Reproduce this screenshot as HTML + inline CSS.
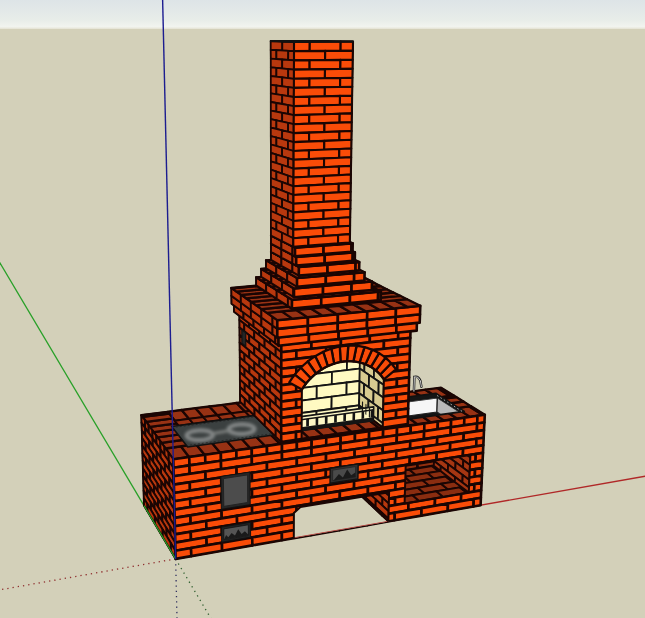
<!DOCTYPE html>
<html><head><meta charset="utf-8"><style>html,body{margin:0;padding:0;background:#d3d0b9;}svg{display:block;}</style></head>
<body><svg width="645" height="618" viewBox="0 0 645 618"><defs><filter id="blur1" x="-20%" y="-20%" width="140%" height="140%"><feGaussianBlur stdDeviation="1.7"/></filter><linearGradient id="sky" x1="0" y1="0" x2="0" y2="1"><stop offset="0" stop-color="#dde4e7"/><stop offset="0.7" stop-color="#e8ede9"/><stop offset="0.92" stop-color="#f2f4ef"/><stop offset="1" stop-color="#e4e2d2"/></linearGradient><clipPath id="opn"><polygon points="293.8,538.1 293.9,513.0 300.5,507.0 389.1,492.3 388.4,521.4"/></clipPath><clipPath id="niche"><polygon points="405.7,465.0 470.4,454.9 468.8,492.5 404.6,503.5"/></clipPath><clipPath id="sink"><polygon points="382.8,405.1 437.4,397.8 458.4,411.2 402.1,419.1"/></clipPath><clipPath id="arch"><polygon points="301.6,439.1 382.7,427.6 383.9,379.3 382.0,376.6 379.9,374.2 377.6,371.9 375.1,369.8 372.5,367.9 369.7,366.3 366.8,364.8 363.8,363.6 360.6,362.6 357.4,361.9 354.1,361.4 350.7,361.2 347.3,361.2 343.8,361.5 340.3,362.0 336.9,362.8 333.4,363.9 330.0,365.1 326.7,366.7 323.4,368.4 320.3,370.4 317.2,372.6 314.2,375.0 311.4,377.5 308.8,380.3 306.3,383.2 304.0,386.3 301.9,389.5"/></clipPath></defs><rect width="645" height="618" fill="#d3d0b9"/><rect width="645" height="29" fill="url(#sky)"/><line x1="175.6" y1="558.9" x2="734.9" y2="460.4" stroke="#b02828" stroke-width="1.3"/><line x1="175.6" y1="558.9" x2="-34.6" y2="204.6" stroke="#28a028" stroke-width="1.3"/><line x1="175.6" y1="558.9" x2="-211.9" y2="627.1" stroke="#903030" stroke-width="1.3" stroke-dasharray="1.3,4"/><line x1="175.6" y1="558.9" x2="231.5" y2="653.1" stroke="#306030" stroke-width="1.3" stroke-dasharray="1.3,4"/><line x1="175.6" y1="558.9" x2="179.3" y2="715.3" stroke="#303060" stroke-width="1.3" stroke-dasharray="1.3,4"/><polygon points="352.4,399.3 441.0,387.7 484.8,414.8 390.8,428.2" fill="#1a0503" stroke="#1a0503" stroke-width="1.5" stroke-linejoin="round"/><polygon points="387.5,404.4 430.9,398.6 447.4,409.3 402.9,415.5" fill="#983214" stroke="#1a0503" stroke-width="2.3" stroke-linejoin="round"/><polygon points="390.8,428.2 404.3,426.3 391.7,417.1 378.4,418.9" fill="#983214" stroke="#1a0503" stroke-width="2.3" stroke-linejoin="round"/><polygon points="404.3,426.3 417.7,424.4 404.9,415.2 391.7,417.1" fill="#983214" stroke="#1a0503" stroke-width="2.3" stroke-linejoin="round"/><polygon points="417.7,424.4 431.0,422.5 417.9,413.4 404.9,415.2" fill="#983214" stroke="#1a0503" stroke-width="2.3" stroke-linejoin="round"/><polygon points="431.0,422.5 444.2,420.6 430.9,411.6 417.9,413.4" fill="#983214" stroke="#1a0503" stroke-width="2.3" stroke-linejoin="round"/><polygon points="444.2,420.6 457.3,418.7 443.7,409.8 430.9,411.6" fill="#983214" stroke="#1a0503" stroke-width="2.3" stroke-linejoin="round"/><polygon points="457.3,418.7 470.2,416.9 456.4,408.1 443.7,409.8" fill="#983214" stroke="#1a0503" stroke-width="2.3" stroke-linejoin="round"/><polygon points="470.2,416.9 483.0,415.0 468.9,406.3 456.4,408.1" fill="#983214" stroke="#1a0503" stroke-width="2.3" stroke-linejoin="round"/><polygon points="483.0,415.0 484.8,414.8 470.7,406.1 468.9,406.3" fill="#983214" stroke="#1a0503" stroke-width="2.3" stroke-linejoin="round"/><polygon points="387.5,404.4 400.2,402.7 388.5,394.6 375.9,396.2" fill="#983214" stroke="#1a0503" stroke-width="2.3" stroke-linejoin="round"/><polygon points="400.2,402.7 412.9,401.0 400.9,392.9 388.5,394.6" fill="#983214" stroke="#1a0503" stroke-width="2.3" stroke-linejoin="round"/><polygon points="412.9,401.0 425.4,399.3 413.2,391.3 400.9,392.9" fill="#983214" stroke="#1a0503" stroke-width="2.3" stroke-linejoin="round"/><polygon points="425.4,399.3 437.9,397.7 425.4,389.7 413.2,391.3" fill="#983214" stroke="#1a0503" stroke-width="2.3" stroke-linejoin="round"/><polygon points="437.9,397.7 450.2,396.0 437.5,388.1 425.4,389.7" fill="#983214" stroke="#1a0503" stroke-width="2.3" stroke-linejoin="round"/><polygon points="450.2,396.0 453.7,395.6 441.0,387.7 437.5,388.1" fill="#983214" stroke="#1a0503" stroke-width="2.3" stroke-linejoin="round"/><polygon points="447.4,409.3 470.7,406.1 463.4,401.5 440.2,404.7" fill="#983214" stroke="#1a0503" stroke-width="2.3" stroke-linejoin="round"/><polygon points="440.2,404.7 463.4,401.5 456.2,397.1 433.3,400.2" fill="#983214" stroke="#1a0503" stroke-width="2.3" stroke-linejoin="round"/><polygon points="433.3,400.2 456.2,397.1 453.7,395.6 430.9,398.6" fill="#983214" stroke="#1a0503" stroke-width="2.3" stroke-linejoin="round"/><polygon points="251.4,401.2 340.0,389.9 390.8,428.2 294.2,442.0" fill="#1a0503" stroke="#1a0503" stroke-width="1.5" stroke-linejoin="round"/><polygon points="285.3,406.4 326.7,401.0 353.5,422.4 310.0,428.4" fill="#983214" stroke="#1a0503" stroke-width="2.3" stroke-linejoin="round"/><polygon points="294.2,442.0 308.7,439.9 298.0,430.1 283.8,432.0" fill="#983214" stroke="#1a0503" stroke-width="2.3" stroke-linejoin="round"/><polygon points="308.7,439.9 323.1,437.9 312.1,428.1 298.0,430.1" fill="#983214" stroke="#1a0503" stroke-width="2.3" stroke-linejoin="round"/><polygon points="323.1,437.9 337.3,435.9 326.0,426.2 312.1,428.1" fill="#983214" stroke="#1a0503" stroke-width="2.3" stroke-linejoin="round"/><polygon points="337.3,435.9 351.4,433.8 339.8,424.3 326.0,426.2" fill="#983214" stroke="#1a0503" stroke-width="2.3" stroke-linejoin="round"/><polygon points="351.4,433.8 365.3,431.9 353.5,422.4 339.8,424.3" fill="#983214" stroke="#1a0503" stroke-width="2.3" stroke-linejoin="round"/><polygon points="365.3,431.9 379.1,429.9 367.0,420.5 353.5,422.4" fill="#983214" stroke="#1a0503" stroke-width="2.3" stroke-linejoin="round"/><polygon points="379.1,429.9 390.8,428.2 378.4,418.9 367.0,420.5" fill="#983214" stroke="#1a0503" stroke-width="2.3" stroke-linejoin="round"/><polygon points="141.3,415.1 251.4,401.2 294.2,442.0 173.3,459.3" fill="#1a0503" stroke="#1a0503" stroke-width="1.5" stroke-linejoin="round"/><polygon points="173.3,459.3 189.1,457.0 180.9,446.3 165.5,448.5" fill="#983214" stroke="#1a0503" stroke-width="2.3" stroke-linejoin="round"/><polygon points="189.1,457.0 204.6,454.8 196.1,444.2 180.9,446.3" fill="#983214" stroke="#1a0503" stroke-width="2.3" stroke-linejoin="round"/><polygon points="204.6,454.8 220.0,452.6 211.2,442.1 196.1,444.2" fill="#983214" stroke="#1a0503" stroke-width="2.3" stroke-linejoin="round"/><polygon points="220.0,452.6 235.3,450.4 226.1,440.1 211.2,442.1" fill="#983214" stroke="#1a0503" stroke-width="2.3" stroke-linejoin="round"/><polygon points="235.3,450.4 250.4,448.3 240.9,438.0 226.1,440.1" fill="#983214" stroke="#1a0503" stroke-width="2.3" stroke-linejoin="round"/><polygon points="250.4,448.3 265.3,446.1 255.5,436.0 240.9,438.0" fill="#983214" stroke="#1a0503" stroke-width="2.3" stroke-linejoin="round"/><polygon points="265.3,446.1 280.1,444.0 270.0,434.0 255.5,436.0" fill="#983214" stroke="#1a0503" stroke-width="2.3" stroke-linejoin="round"/><polygon points="280.1,444.0 294.2,442.0 283.8,432.0 270.0,434.0" fill="#983214" stroke="#1a0503" stroke-width="2.3" stroke-linejoin="round"/><polygon points="174.8,420.8 189.2,418.9 181.7,410.0 167.6,411.8" fill="#983214" stroke="#1a0503" stroke-width="2.3" stroke-linejoin="round"/><polygon points="189.2,418.9 203.3,417.1 195.6,408.2 181.7,410.0" fill="#983214" stroke="#1a0503" stroke-width="2.3" stroke-linejoin="round"/><polygon points="203.3,417.1 217.4,415.2 209.4,406.5 195.6,408.2" fill="#983214" stroke="#1a0503" stroke-width="2.3" stroke-linejoin="round"/><polygon points="217.4,415.2 231.3,413.4 223.0,404.8 209.4,406.5" fill="#983214" stroke="#1a0503" stroke-width="2.3" stroke-linejoin="round"/><polygon points="231.3,413.4 245.1,411.6 236.5,403.0 223.0,404.8" fill="#983214" stroke="#1a0503" stroke-width="2.3" stroke-linejoin="round"/><polygon points="245.1,411.6 258.8,409.8 249.9,401.3 236.5,403.0" fill="#983214" stroke="#1a0503" stroke-width="2.3" stroke-linejoin="round"/><polygon points="258.8,409.8 260.3,409.6 251.4,401.2 249.9,401.3" fill="#983214" stroke="#1a0503" stroke-width="2.3" stroke-linejoin="round"/><polygon points="165.5,448.5 193.8,444.5 189.4,439.0 161.4,442.9" fill="#983214" stroke="#1a0503" stroke-width="2.3" stroke-linejoin="round"/><polygon points="161.4,442.9 189.4,439.0 185.2,433.7 157.5,437.4" fill="#983214" stroke="#1a0503" stroke-width="2.3" stroke-linejoin="round"/><polygon points="157.5,437.4 185.2,433.7 181.0,428.4 153.6,432.1" fill="#983214" stroke="#1a0503" stroke-width="2.3" stroke-linejoin="round"/><polygon points="153.6,432.1 181.0,428.4 176.9,423.4 149.8,426.9" fill="#983214" stroke="#1a0503" stroke-width="2.3" stroke-linejoin="round"/><polygon points="149.8,426.9 176.9,423.4 172.9,418.4 146.2,421.8" fill="#983214" stroke="#1a0503" stroke-width="2.3" stroke-linejoin="round"/><polygon points="146.2,421.8 172.9,418.4 169.1,413.5 142.6,416.9" fill="#983214" stroke="#1a0503" stroke-width="2.3" stroke-linejoin="round"/><polygon points="142.6,416.9 169.1,413.5 167.6,411.8 141.3,415.1" fill="#983214" stroke="#1a0503" stroke-width="2.3" stroke-linejoin="round"/><polygon points="141.3,415.1 173.3,459.3 175.6,558.9 144.0,505.6" fill="#1a0503" stroke="#1a0503" stroke-width="1.5" stroke-linejoin="round"/><polygon points="141.3,415.1 144.9,420.1 145.1,427.9 141.5,422.8" fill="#b8380e" stroke="#1a0503" stroke-width="1.9" stroke-linejoin="round"/><polygon points="144.9,420.1 148.6,425.2 148.8,433.1 145.1,427.9" fill="#b8380e" stroke="#1a0503" stroke-width="1.9" stroke-linejoin="round"/><polygon points="148.6,425.2 152.4,430.4 152.6,438.4 148.8,433.1" fill="#b8380e" stroke="#1a0503" stroke-width="1.9" stroke-linejoin="round"/><polygon points="152.4,430.4 156.3,435.8 156.5,443.9 152.6,438.4" fill="#b8380e" stroke="#1a0503" stroke-width="1.9" stroke-linejoin="round"/><polygon points="156.3,435.8 160.3,441.3 160.5,449.5 156.5,443.9" fill="#b8380e" stroke="#1a0503" stroke-width="1.9" stroke-linejoin="round"/><polygon points="160.3,441.3 164.4,447.0 164.6,455.3 160.5,449.5" fill="#b8380e" stroke="#1a0503" stroke-width="1.9" stroke-linejoin="round"/><polygon points="164.4,447.0 168.6,452.8 168.8,461.2 164.6,455.3" fill="#b8380e" stroke="#1a0503" stroke-width="1.9" stroke-linejoin="round"/><polygon points="168.6,452.8 173.0,458.8 173.2,467.3 168.8,461.2" fill="#b8380e" stroke="#1a0503" stroke-width="1.9" stroke-linejoin="round"/><polygon points="173.0,458.8 173.3,459.3 173.5,467.8 173.2,467.3" fill="#b8380e" stroke="#1a0503" stroke-width="1.9" stroke-linejoin="round"/><polygon points="141.5,422.8 145.1,427.9 145.4,435.6 141.8,430.5" fill="#b8380e" stroke="#1a0503" stroke-width="1.9" stroke-linejoin="round"/><polygon points="145.1,427.9 152.6,438.4 152.8,446.3 145.4,435.6" fill="#b8380e" stroke="#1a0503" stroke-width="1.9" stroke-linejoin="round"/><polygon points="152.6,438.4 160.5,449.5 160.7,457.6 152.8,446.3" fill="#b8380e" stroke="#1a0503" stroke-width="1.9" stroke-linejoin="round"/><polygon points="160.5,449.5 168.8,461.2 169.1,469.5 160.7,457.6" fill="#b8380e" stroke="#1a0503" stroke-width="1.9" stroke-linejoin="round"/><polygon points="168.8,461.2 173.5,467.8 173.7,476.2 169.1,469.5" fill="#b8380e" stroke="#1a0503" stroke-width="1.9" stroke-linejoin="round"/><polygon points="141.8,430.5 149.1,440.9 149.3,448.7 142.0,438.1" fill="#b8380e" stroke="#1a0503" stroke-width="1.9" stroke-linejoin="round"/><polygon points="149.1,440.9 156.7,451.9 156.9,459.9 149.3,448.7" fill="#b8380e" stroke="#1a0503" stroke-width="1.9" stroke-linejoin="round"/><polygon points="156.7,451.9 164.8,463.5 165.0,471.7 156.9,459.9" fill="#b8380e" stroke="#1a0503" stroke-width="1.9" stroke-linejoin="round"/><polygon points="164.8,463.5 173.4,475.7 173.6,484.1 165.0,471.7" fill="#b8380e" stroke="#1a0503" stroke-width="1.9" stroke-linejoin="round"/><polygon points="173.4,475.7 173.7,476.2 173.9,484.6 173.6,484.1" fill="#b8380e" stroke="#1a0503" stroke-width="1.9" stroke-linejoin="round"/><polygon points="142.0,438.1 145.6,443.3 145.8,451.0 142.2,445.7" fill="#b8380e" stroke="#1a0503" stroke-width="1.9" stroke-linejoin="round"/><polygon points="145.6,443.3 153.1,454.2 153.3,462.1 145.8,451.0" fill="#b8380e" stroke="#1a0503" stroke-width="1.9" stroke-linejoin="round"/><polygon points="153.1,454.2 160.9,465.7 161.1,473.8 153.3,462.1" fill="#b8380e" stroke="#1a0503" stroke-width="1.9" stroke-linejoin="round"/><polygon points="160.9,465.7 169.3,477.8 169.5,486.1 161.1,473.8" fill="#b8380e" stroke="#1a0503" stroke-width="1.9" stroke-linejoin="round"/><polygon points="169.3,477.8 173.9,484.6 174.1,493.0 169.5,486.1" fill="#b8380e" stroke="#1a0503" stroke-width="1.9" stroke-linejoin="round"/><polygon points="142.2,445.7 149.5,456.5 149.7,464.2 142.4,453.3" fill="#b8380e" stroke="#1a0503" stroke-width="1.9" stroke-linejoin="round"/><polygon points="149.5,456.5 157.2,467.9 157.4,475.8 149.7,464.2" fill="#b8380e" stroke="#1a0503" stroke-width="1.9" stroke-linejoin="round"/><polygon points="157.2,467.9 165.2,479.9 165.4,488.0 157.4,475.8" fill="#b8380e" stroke="#1a0503" stroke-width="1.9" stroke-linejoin="round"/><polygon points="165.2,479.9 173.8,492.5 174.0,500.8 165.4,488.0" fill="#b8380e" stroke="#1a0503" stroke-width="1.9" stroke-linejoin="round"/><polygon points="173.8,492.5 174.1,493.0 174.3,501.3 174.0,500.8" fill="#b8380e" stroke="#1a0503" stroke-width="1.9" stroke-linejoin="round"/><polygon points="142.4,453.3 146.0,458.7 146.3,466.3 142.7,460.8" fill="#b8380e" stroke="#1a0503" stroke-width="1.9" stroke-linejoin="round"/><polygon points="146.0,458.7 153.5,470.0 153.7,477.8 146.3,466.3" fill="#b8380e" stroke="#1a0503" stroke-width="1.9" stroke-linejoin="round"/><polygon points="153.5,470.0 161.4,481.8 161.6,489.8 153.7,477.8" fill="#b8380e" stroke="#1a0503" stroke-width="1.9" stroke-linejoin="round"/><polygon points="161.4,481.8 169.7,494.3 169.9,502.5 161.6,489.8" fill="#b8380e" stroke="#1a0503" stroke-width="1.9" stroke-linejoin="round"/><polygon points="169.7,494.3 174.3,501.3 174.5,509.6 169.9,502.5" fill="#b8380e" stroke="#1a0503" stroke-width="1.9" stroke-linejoin="round"/><polygon points="142.7,460.8 149.9,472.0 150.2,479.7 142.9,468.4" fill="#b8380e" stroke="#1a0503" stroke-width="1.9" stroke-linejoin="round"/><polygon points="149.9,472.0 157.6,483.7 157.8,491.6 150.2,479.7" fill="#b8380e" stroke="#1a0503" stroke-width="1.9" stroke-linejoin="round"/><polygon points="157.6,483.7 165.7,496.1 165.9,504.2 157.8,491.6" fill="#b8380e" stroke="#1a0503" stroke-width="1.9" stroke-linejoin="round"/><polygon points="165.7,496.1 174.2,509.2 174.4,517.4 165.9,504.2" fill="#b8380e" stroke="#1a0503" stroke-width="1.9" stroke-linejoin="round"/><polygon points="174.2,509.2 174.5,509.6 174.7,517.9 174.4,517.4" fill="#b8380e" stroke="#1a0503" stroke-width="1.9" stroke-linejoin="round"/><polygon points="142.9,468.4 146.5,473.9 146.7,481.5 143.1,475.9" fill="#b8380e" stroke="#1a0503" stroke-width="1.9" stroke-linejoin="round"/><polygon points="146.5,473.9 153.9,485.6 154.1,493.3 146.7,481.5" fill="#b8380e" stroke="#1a0503" stroke-width="1.9" stroke-linejoin="round"/><polygon points="153.9,485.6 161.8,497.8 162.0,505.7 154.1,493.3" fill="#b8380e" stroke="#1a0503" stroke-width="1.9" stroke-linejoin="round"/><polygon points="161.8,497.8 170.0,510.7 170.2,518.9 162.0,505.7" fill="#b8380e" stroke="#1a0503" stroke-width="1.9" stroke-linejoin="round"/><polygon points="170.0,510.7 174.7,517.9 174.9,526.2 170.2,518.9" fill="#b8380e" stroke="#1a0503" stroke-width="1.9" stroke-linejoin="round"/><polygon points="143.1,475.9 150.4,487.4 150.6,495.0 143.4,483.3" fill="#b8380e" stroke="#1a0503" stroke-width="1.9" stroke-linejoin="round"/><polygon points="150.4,487.4 158.0,499.5 158.2,507.3 150.6,495.0" fill="#b8380e" stroke="#1a0503" stroke-width="1.9" stroke-linejoin="round"/><polygon points="158.0,499.5 166.1,512.2 166.3,520.2 158.2,507.3" fill="#b8380e" stroke="#1a0503" stroke-width="1.9" stroke-linejoin="round"/><polygon points="166.1,512.2 174.6,525.7 174.7,533.9 166.3,520.2" fill="#b8380e" stroke="#1a0503" stroke-width="1.9" stroke-linejoin="round"/><polygon points="174.6,525.7 174.9,526.2 175.1,534.4 174.7,533.9" fill="#b8380e" stroke="#1a0503" stroke-width="1.9" stroke-linejoin="round"/><polygon points="143.4,483.3 146.9,489.1 147.2,496.6 143.6,490.8" fill="#b8380e" stroke="#1a0503" stroke-width="1.9" stroke-linejoin="round"/><polygon points="146.9,489.1 154.4,501.1 154.6,508.8 147.2,496.6" fill="#b8380e" stroke="#1a0503" stroke-width="1.9" stroke-linejoin="round"/><polygon points="154.4,501.1 162.2,513.7 162.4,521.6 154.6,508.8" fill="#b8380e" stroke="#1a0503" stroke-width="1.9" stroke-linejoin="round"/><polygon points="162.2,513.7 170.4,527.0 170.6,535.0 162.4,521.6" fill="#b8380e" stroke="#1a0503" stroke-width="1.9" stroke-linejoin="round"/><polygon points="170.4,527.0 175.1,534.4 175.3,542.6 170.6,535.0" fill="#b8380e" stroke="#1a0503" stroke-width="1.9" stroke-linejoin="round"/><polygon points="143.6,490.8 150.8,502.6 151.0,510.2 143.8,498.2" fill="#b8380e" stroke="#1a0503" stroke-width="1.9" stroke-linejoin="round"/><polygon points="150.8,502.6 158.4,515.1 158.6,522.9 151.0,510.2" fill="#b8380e" stroke="#1a0503" stroke-width="1.9" stroke-linejoin="round"/><polygon points="158.4,515.1 166.5,528.2 166.7,536.2 158.6,522.9" fill="#b8380e" stroke="#1a0503" stroke-width="1.9" stroke-linejoin="round"/><polygon points="166.5,528.2 174.9,542.1 175.1,550.2 166.7,536.2" fill="#b8380e" stroke="#1a0503" stroke-width="1.9" stroke-linejoin="round"/><polygon points="174.9,542.1 175.3,542.6 175.4,550.7 175.1,550.2" fill="#b8380e" stroke="#1a0503" stroke-width="1.9" stroke-linejoin="round"/><polygon points="143.8,498.2 147.4,504.1 147.6,511.6 144.0,505.6" fill="#b8380e" stroke="#1a0503" stroke-width="1.9" stroke-linejoin="round"/><polygon points="147.4,504.1 154.8,516.5 155.0,524.1 147.6,511.6" fill="#b8380e" stroke="#1a0503" stroke-width="1.9" stroke-linejoin="round"/><polygon points="154.8,516.5 162.6,529.4 162.8,537.3 155.0,524.1" fill="#b8380e" stroke="#1a0503" stroke-width="1.9" stroke-linejoin="round"/><polygon points="162.6,529.4 170.8,543.1 171.0,551.1 162.8,537.3" fill="#b8380e" stroke="#1a0503" stroke-width="1.9" stroke-linejoin="round"/><polygon points="170.8,543.1 175.4,550.7 175.6,558.9 171.0,551.1" fill="#b8380e" stroke="#1a0503" stroke-width="1.9" stroke-linejoin="round"/><polygon points="173.3,459.3 484.8,414.8 480.6,505.2 175.6,558.9" fill="#1a0503" stroke="#1a0503" stroke-width="1.5" stroke-linejoin="round"/><polygon points="173.3,459.3 189.3,457.0 189.5,465.4 173.5,467.8" fill="#fa4c08" stroke="#1a0503" stroke-width="2.6" stroke-linejoin="round"/><polygon points="189.3,457.0 205.2,454.7 205.3,463.1 189.5,465.4" fill="#fa4c08" stroke="#1a0503" stroke-width="2.6" stroke-linejoin="round"/><polygon points="205.2,454.7 220.9,452.5 221.0,460.8 205.3,463.1" fill="#fa4c08" stroke="#1a0503" stroke-width="2.6" stroke-linejoin="round"/><polygon points="220.9,452.5 236.4,450.3 236.5,458.6 221.0,460.8" fill="#fa4c08" stroke="#1a0503" stroke-width="2.6" stroke-linejoin="round"/><polygon points="236.4,450.3 251.8,448.1 251.8,456.3 236.5,458.6" fill="#fa4c08" stroke="#1a0503" stroke-width="2.6" stroke-linejoin="round"/><polygon points="251.8,448.1 267.0,445.9 267.0,454.1 251.8,456.3" fill="#fa4c08" stroke="#1a0503" stroke-width="2.6" stroke-linejoin="round"/><polygon points="267.0,445.9 282.0,443.8 282.0,451.9 267.0,454.1" fill="#fa4c08" stroke="#1a0503" stroke-width="2.6" stroke-linejoin="round"/><polygon points="282.0,443.8 296.9,441.6 296.9,449.8 282.0,451.9" fill="#fa4c08" stroke="#1a0503" stroke-width="2.6" stroke-linejoin="round"/><polygon points="296.9,441.6 311.7,439.5 311.6,447.6 296.9,449.8" fill="#fa4c08" stroke="#1a0503" stroke-width="2.6" stroke-linejoin="round"/><polygon points="311.7,439.5 326.3,437.4 326.2,445.5 311.6,447.6" fill="#fa4c08" stroke="#1a0503" stroke-width="2.6" stroke-linejoin="round"/><polygon points="326.3,437.4 340.7,435.4 340.6,443.4 326.2,445.5" fill="#fa4c08" stroke="#1a0503" stroke-width="2.6" stroke-linejoin="round"/><polygon points="340.7,435.4 355.0,433.3 354.9,441.3 340.6,443.4" fill="#fa4c08" stroke="#1a0503" stroke-width="2.6" stroke-linejoin="round"/><polygon points="355.0,433.3 369.2,431.3 369.0,439.3 354.9,441.3" fill="#fa4c08" stroke="#1a0503" stroke-width="2.6" stroke-linejoin="round"/><polygon points="369.2,431.3 383.2,429.3 383.0,437.2 369.0,439.3" fill="#fa4c08" stroke="#1a0503" stroke-width="2.6" stroke-linejoin="round"/><polygon points="383.2,429.3 397.1,427.3 396.9,435.2 383.0,437.2" fill="#fa4c08" stroke="#1a0503" stroke-width="2.6" stroke-linejoin="round"/><polygon points="397.1,427.3 410.8,425.4 410.6,433.2 396.9,435.2" fill="#fa4c08" stroke="#1a0503" stroke-width="2.6" stroke-linejoin="round"/><polygon points="410.8,425.4 424.4,423.4 424.2,431.2 410.6,433.2" fill="#fa4c08" stroke="#1a0503" stroke-width="2.6" stroke-linejoin="round"/><polygon points="424.4,423.4 437.9,421.5 437.6,429.3 424.2,431.2" fill="#fa4c08" stroke="#1a0503" stroke-width="2.6" stroke-linejoin="round"/><polygon points="437.9,421.5 451.2,419.6 450.9,427.3 437.6,429.3" fill="#fa4c08" stroke="#1a0503" stroke-width="2.6" stroke-linejoin="round"/><polygon points="451.2,419.6 464.4,417.7 464.1,425.4 450.9,427.3" fill="#fa4c08" stroke="#1a0503" stroke-width="2.6" stroke-linejoin="round"/><polygon points="464.4,417.7 477.5,415.8 477.2,423.5 464.1,425.4" fill="#fa4c08" stroke="#1a0503" stroke-width="2.6" stroke-linejoin="round"/><polygon points="477.5,415.8 484.8,414.8 484.4,422.5 477.2,423.5" fill="#fa4c08" stroke="#1a0503" stroke-width="2.6" stroke-linejoin="round"/><polygon points="173.5,467.8 189.5,465.4 189.7,473.8 173.7,476.2" fill="#fa4c08" stroke="#1a0503" stroke-width="2.6" stroke-linejoin="round"/><polygon points="189.5,465.4 221.0,460.8 221.1,469.2 189.7,473.8" fill="#fa4c08" stroke="#1a0503" stroke-width="2.6" stroke-linejoin="round"/><polygon points="221.0,460.8 251.8,456.3 251.9,464.6 221.1,469.2" fill="#fa4c08" stroke="#1a0503" stroke-width="2.6" stroke-linejoin="round"/><polygon points="251.8,456.3 282.0,451.9 282.0,460.1 251.9,464.6" fill="#fa4c08" stroke="#1a0503" stroke-width="2.6" stroke-linejoin="round"/><polygon points="282.0,451.9 311.6,447.6 311.5,455.7 282.0,460.1" fill="#fa4c08" stroke="#1a0503" stroke-width="2.6" stroke-linejoin="round"/><polygon points="311.6,447.6 340.6,443.4 340.5,451.4 311.5,455.7" fill="#fa4c08" stroke="#1a0503" stroke-width="2.6" stroke-linejoin="round"/><polygon points="340.6,443.4 369.0,439.3 368.8,447.2 340.5,451.4" fill="#fa4c08" stroke="#1a0503" stroke-width="2.6" stroke-linejoin="round"/><polygon points="369.0,439.3 396.9,435.2 396.6,443.1 368.8,447.2" fill="#fa4c08" stroke="#1a0503" stroke-width="2.6" stroke-linejoin="round"/><polygon points="396.9,435.2 424.2,431.2 423.9,439.0 396.6,443.1" fill="#fa4c08" stroke="#1a0503" stroke-width="2.6" stroke-linejoin="round"/><polygon points="424.2,431.2 450.9,427.3 450.6,435.1 423.9,439.0" fill="#fa4c08" stroke="#1a0503" stroke-width="2.6" stroke-linejoin="round"/><polygon points="450.9,427.3 477.2,423.5 476.8,431.2 450.6,435.1" fill="#fa4c08" stroke="#1a0503" stroke-width="2.6" stroke-linejoin="round"/><polygon points="477.2,423.5 484.4,422.5 484.0,430.1 476.8,431.2" fill="#fa4c08" stroke="#1a0503" stroke-width="2.6" stroke-linejoin="round"/><polygon points="173.7,476.2 205.5,471.5 205.6,479.8 173.9,484.6" fill="#fa4c08" stroke="#1a0503" stroke-width="2.6" stroke-linejoin="round"/><polygon points="205.5,471.5 236.6,466.9 236.6,475.1 205.6,479.8" fill="#fa4c08" stroke="#1a0503" stroke-width="2.6" stroke-linejoin="round"/><polygon points="236.6,466.9 267.0,462.3 267.0,470.5 236.6,475.1" fill="#fa4c08" stroke="#1a0503" stroke-width="2.6" stroke-linejoin="round"/><polygon points="267.0,462.3 296.9,457.9 296.8,466.0 267.0,470.5" fill="#fa4c08" stroke="#1a0503" stroke-width="2.6" stroke-linejoin="round"/><polygon points="296.9,457.9 326.1,453.6 326.0,461.6 296.8,466.0" fill="#fa4c08" stroke="#1a0503" stroke-width="2.6" stroke-linejoin="round"/><polygon points="326.1,453.6 354.7,449.3 354.6,457.3 326.0,461.6" fill="#fa4c08" stroke="#1a0503" stroke-width="2.6" stroke-linejoin="round"/><polygon points="354.7,449.3 382.8,445.1 382.6,453.0 354.6,457.3" fill="#fa4c08" stroke="#1a0503" stroke-width="2.6" stroke-linejoin="round"/><polygon points="382.8,445.1 410.3,441.1 410.1,448.9 382.6,453.0" fill="#fa4c08" stroke="#1a0503" stroke-width="2.6" stroke-linejoin="round"/><polygon points="410.3,441.1 437.3,437.1 437.0,444.8 410.1,448.9" fill="#fa4c08" stroke="#1a0503" stroke-width="2.6" stroke-linejoin="round"/><polygon points="437.3,437.1 463.8,433.1 463.5,440.8 437.0,444.8" fill="#fa4c08" stroke="#1a0503" stroke-width="2.6" stroke-linejoin="round"/><polygon points="463.8,433.1 484.0,430.1 483.7,437.7 463.5,440.8" fill="#fa4c08" stroke="#1a0503" stroke-width="2.6" stroke-linejoin="round"/><polygon points="173.9,484.6 189.8,482.2 190.0,490.5 174.1,493.0" fill="#fa4c08" stroke="#1a0503" stroke-width="2.6" stroke-linejoin="round"/><polygon points="189.8,482.2 221.2,477.5 221.3,485.7 190.0,490.5" fill="#fa4c08" stroke="#1a0503" stroke-width="2.6" stroke-linejoin="round"/><polygon points="221.2,477.5 251.9,472.8 252.0,481.0 221.3,485.7" fill="#fa4c08" stroke="#1a0503" stroke-width="2.6" stroke-linejoin="round"/><polygon points="251.9,472.8 282.0,468.3 282.0,476.4 252.0,481.0" fill="#fa4c08" stroke="#1a0503" stroke-width="2.6" stroke-linejoin="round"/><polygon points="282.0,468.3 311.5,463.8 311.4,471.8 282.0,476.4" fill="#fa4c08" stroke="#1a0503" stroke-width="2.6" stroke-linejoin="round"/><polygon points="311.5,463.8 340.4,459.4 340.2,467.4 311.4,471.8" fill="#fa4c08" stroke="#1a0503" stroke-width="2.6" stroke-linejoin="round"/><polygon points="340.4,459.4 368.7,455.1 368.5,463.0 340.2,467.4" fill="#fa4c08" stroke="#1a0503" stroke-width="2.6" stroke-linejoin="round"/><polygon points="368.7,455.1 396.4,450.9 396.2,458.8 368.5,463.0" fill="#fa4c08" stroke="#1a0503" stroke-width="2.6" stroke-linejoin="round"/><polygon points="396.4,450.9 423.6,446.8 423.4,454.6 396.2,458.8" fill="#fa4c08" stroke="#1a0503" stroke-width="2.6" stroke-linejoin="round"/><polygon points="423.6,446.8 450.3,442.8 450.0,450.5 423.4,454.6" fill="#fa4c08" stroke="#1a0503" stroke-width="2.6" stroke-linejoin="round"/><polygon points="450.3,442.8 476.5,438.8 476.2,446.4 450.0,450.5" fill="#fa4c08" stroke="#1a0503" stroke-width="2.6" stroke-linejoin="round"/><polygon points="476.5,438.8 483.7,437.7 483.3,445.3 476.2,446.4" fill="#fa4c08" stroke="#1a0503" stroke-width="2.6" stroke-linejoin="round"/><polygon points="174.1,493.0 205.7,488.1 205.9,496.4 174.3,501.3" fill="#fa4c08" stroke="#1a0503" stroke-width="2.6" stroke-linejoin="round"/><polygon points="205.7,488.1 236.7,483.3 236.8,491.5 205.9,496.4" fill="#fa4c08" stroke="#1a0503" stroke-width="2.6" stroke-linejoin="round"/><polygon points="236.7,483.3 267.1,478.7 267.1,486.8 236.8,491.5" fill="#fa4c08" stroke="#1a0503" stroke-width="2.6" stroke-linejoin="round"/><polygon points="267.1,478.7 296.8,474.1 296.7,482.1 267.1,486.8" fill="#fa4c08" stroke="#1a0503" stroke-width="2.6" stroke-linejoin="round"/><polygon points="296.8,474.1 325.9,469.6 325.8,477.6 296.7,482.1" fill="#fa4c08" stroke="#1a0503" stroke-width="2.6" stroke-linejoin="round"/><polygon points="325.9,469.6 354.5,465.2 354.3,473.1 325.8,477.6" fill="#fa4c08" stroke="#1a0503" stroke-width="2.6" stroke-linejoin="round"/><polygon points="354.5,465.2 382.4,460.9 382.2,468.7 354.3,473.1" fill="#fa4c08" stroke="#1a0503" stroke-width="2.6" stroke-linejoin="round"/><polygon points="382.4,460.9 409.9,456.7 409.6,464.4 382.2,468.7" fill="#fa4c08" stroke="#1a0503" stroke-width="2.6" stroke-linejoin="round"/><polygon points="409.9,456.7 436.8,452.5 436.5,460.2 409.6,464.4" fill="#fa4c08" stroke="#1a0503" stroke-width="2.6" stroke-linejoin="round"/><polygon points="436.8,452.5 463.2,448.4 462.8,456.1 436.5,460.2" fill="#fa4c08" stroke="#1a0503" stroke-width="2.6" stroke-linejoin="round"/><polygon points="463.2,448.4 483.3,445.3 483.0,452.9 462.8,456.1" fill="#fa4c08" stroke="#1a0503" stroke-width="2.6" stroke-linejoin="round"/><polygon points="174.3,501.3 190.2,498.8 190.3,507.1 174.5,509.6" fill="#fa4c08" stroke="#1a0503" stroke-width="2.6" stroke-linejoin="round"/><polygon points="190.2,498.8 221.4,493.9 221.5,502.1 190.3,507.1" fill="#fa4c08" stroke="#1a0503" stroke-width="2.6" stroke-linejoin="round"/><polygon points="221.4,493.9 252.0,489.1 252.1,497.3 221.5,502.1" fill="#fa4c08" stroke="#1a0503" stroke-width="2.6" stroke-linejoin="round"/><polygon points="252.0,489.1 282.0,484.4 282.0,492.5 252.1,497.3" fill="#fa4c08" stroke="#1a0503" stroke-width="2.6" stroke-linejoin="round"/><polygon points="282.0,484.4 311.4,479.8 311.3,487.8 282.0,492.5" fill="#fa4c08" stroke="#1a0503" stroke-width="2.6" stroke-linejoin="round"/><polygon points="311.4,479.8 340.1,475.3 340.0,483.2 311.3,487.8" fill="#fa4c08" stroke="#1a0503" stroke-width="2.6" stroke-linejoin="round"/><polygon points="340.1,475.3 368.3,470.9 368.2,478.7 340.0,483.2" fill="#fa4c08" stroke="#1a0503" stroke-width="2.6" stroke-linejoin="round"/><polygon points="368.3,470.9 396.0,466.6 395.8,474.3 368.2,478.7" fill="#fa4c08" stroke="#1a0503" stroke-width="2.6" stroke-linejoin="round"/><polygon points="396.0,466.6 423.1,462.3 422.9,470.0 395.8,474.3" fill="#fa4c08" stroke="#1a0503" stroke-width="2.6" stroke-linejoin="round"/><polygon points="423.1,462.3 449.7,458.1 449.4,465.8 422.9,470.0" fill="#fa4c08" stroke="#1a0503" stroke-width="2.6" stroke-linejoin="round"/><polygon points="449.7,458.1 475.8,454.0 475.5,461.6 449.4,465.8" fill="#fa4c08" stroke="#1a0503" stroke-width="2.6" stroke-linejoin="round"/><polygon points="475.8,454.0 483.0,452.9 482.6,460.5 475.5,461.6" fill="#fa4c08" stroke="#1a0503" stroke-width="2.6" stroke-linejoin="round"/><polygon points="174.5,509.6 206.0,504.6 206.1,512.8 174.7,517.9" fill="#fa4c08" stroke="#1a0503" stroke-width="2.6" stroke-linejoin="round"/><polygon points="206.0,504.6 236.9,499.7 236.9,507.8 206.1,512.8" fill="#fa4c08" stroke="#1a0503" stroke-width="2.6" stroke-linejoin="round"/><polygon points="236.9,499.7 267.1,494.9 267.1,502.9 236.9,507.8" fill="#fa4c08" stroke="#1a0503" stroke-width="2.6" stroke-linejoin="round"/><polygon points="267.1,494.9 296.7,490.1 296.7,498.1 267.1,502.9" fill="#fa4c08" stroke="#1a0503" stroke-width="2.6" stroke-linejoin="round"/><polygon points="296.7,490.1 325.7,485.5 325.6,493.4 296.7,498.1" fill="#fa4c08" stroke="#1a0503" stroke-width="2.6" stroke-linejoin="round"/><polygon points="325.7,485.5 354.2,481.0 354.0,488.8 325.6,493.4" fill="#fa4c08" stroke="#1a0503" stroke-width="2.6" stroke-linejoin="round"/><polygon points="354.2,481.0 382.1,476.5 381.9,484.3 354.0,488.8" fill="#fa4c08" stroke="#1a0503" stroke-width="2.6" stroke-linejoin="round"/><polygon points="382.1,476.5 409.4,472.1 409.2,479.9 381.9,484.3" fill="#fa4c08" stroke="#1a0503" stroke-width="2.6" stroke-linejoin="round"/><polygon points="409.4,472.1 436.2,467.9 435.9,475.5 409.2,479.9" fill="#fa4c08" stroke="#1a0503" stroke-width="2.6" stroke-linejoin="round"/><polygon points="436.2,467.9 462.5,463.7 462.2,471.2 435.9,475.5" fill="#fa4c08" stroke="#1a0503" stroke-width="2.6" stroke-linejoin="round"/><polygon points="462.5,463.7 482.6,460.5 482.3,468.0 462.2,471.2" fill="#fa4c08" stroke="#1a0503" stroke-width="2.6" stroke-linejoin="round"/><polygon points="174.7,517.9 190.5,515.4 190.6,523.6 174.9,526.2" fill="#fa4c08" stroke="#1a0503" stroke-width="2.6" stroke-linejoin="round"/><polygon points="190.5,515.4 221.6,510.3 221.7,518.4 190.6,523.6" fill="#fa4c08" stroke="#1a0503" stroke-width="2.6" stroke-linejoin="round"/><polygon points="221.6,510.3 252.1,505.4 252.1,513.4 221.7,518.4" fill="#fa4c08" stroke="#1a0503" stroke-width="2.6" stroke-linejoin="round"/><polygon points="252.1,505.4 282.0,500.5 282.0,508.5 252.1,513.4" fill="#fa4c08" stroke="#1a0503" stroke-width="2.6" stroke-linejoin="round"/><polygon points="282.0,500.5 311.2,495.8 311.2,503.7 282.0,508.5" fill="#fa4c08" stroke="#1a0503" stroke-width="2.6" stroke-linejoin="round"/><polygon points="311.2,495.8 339.9,491.1 339.8,498.9 311.2,503.7" fill="#fa4c08" stroke="#1a0503" stroke-width="2.6" stroke-linejoin="round"/><polygon points="339.9,491.1 368.0,486.5 367.9,494.3 339.8,498.9" fill="#fa4c08" stroke="#1a0503" stroke-width="2.6" stroke-linejoin="round"/><polygon points="368.0,486.5 395.6,482.1 395.4,489.8 367.9,494.3" fill="#fa4c08" stroke="#1a0503" stroke-width="2.6" stroke-linejoin="round"/><polygon points="395.6,482.1 422.6,477.7 422.4,485.3 395.4,489.8" fill="#fa4c08" stroke="#1a0503" stroke-width="2.6" stroke-linejoin="round"/><polygon points="422.6,477.7 449.1,473.4 448.8,480.9 422.4,485.3" fill="#fa4c08" stroke="#1a0503" stroke-width="2.6" stroke-linejoin="round"/><polygon points="449.1,473.4 475.1,469.1 474.8,476.7 448.8,480.9" fill="#fa4c08" stroke="#1a0503" stroke-width="2.6" stroke-linejoin="round"/><polygon points="475.1,469.1 482.3,468.0 481.9,475.5 474.8,476.7" fill="#fa4c08" stroke="#1a0503" stroke-width="2.6" stroke-linejoin="round"/><polygon points="174.9,526.2 206.3,521.0 206.4,529.1 175.1,534.4" fill="#fa4c08" stroke="#1a0503" stroke-width="2.6" stroke-linejoin="round"/><polygon points="206.3,521.0 237.0,515.9 237.1,524.0 206.4,529.1" fill="#fa4c08" stroke="#1a0503" stroke-width="2.6" stroke-linejoin="round"/><polygon points="237.0,515.9 267.1,510.9 267.1,518.9 237.1,524.0" fill="#fa4c08" stroke="#1a0503" stroke-width="2.6" stroke-linejoin="round"/><polygon points="267.1,510.9 296.6,506.1 296.6,514.0 267.1,518.9" fill="#fa4c08" stroke="#1a0503" stroke-width="2.6" stroke-linejoin="round"/><polygon points="296.6,506.1 325.6,501.3 325.5,509.2 296.6,514.0" fill="#fa4c08" stroke="#1a0503" stroke-width="2.6" stroke-linejoin="round"/><polygon points="325.6,501.3 353.9,496.6 353.8,504.4 325.5,509.2" fill="#fa4c08" stroke="#1a0503" stroke-width="2.6" stroke-linejoin="round"/><polygon points="353.9,496.6 381.7,492.0 381.5,499.7 353.8,504.4" fill="#fa4c08" stroke="#1a0503" stroke-width="2.6" stroke-linejoin="round"/><polygon points="381.7,492.0 408.9,487.5 408.7,495.2 381.5,499.7" fill="#fa4c08" stroke="#1a0503" stroke-width="2.6" stroke-linejoin="round"/><polygon points="408.9,487.5 435.7,483.1 435.4,490.7 408.7,495.2" fill="#fa4c08" stroke="#1a0503" stroke-width="2.6" stroke-linejoin="round"/><polygon points="435.7,483.1 461.9,478.8 461.6,486.3 435.4,490.7" fill="#fa4c08" stroke="#1a0503" stroke-width="2.6" stroke-linejoin="round"/><polygon points="461.9,478.8 481.9,475.5 481.6,482.9 461.6,486.3" fill="#fa4c08" stroke="#1a0503" stroke-width="2.6" stroke-linejoin="round"/><polygon points="175.1,534.4 190.8,531.8 191.0,539.9 175.3,542.6" fill="#fa4c08" stroke="#1a0503" stroke-width="2.6" stroke-linejoin="round"/><polygon points="190.8,531.8 221.8,526.6 221.9,534.6 191.0,539.9" fill="#fa4c08" stroke="#1a0503" stroke-width="2.6" stroke-linejoin="round"/><polygon points="221.8,526.6 252.2,521.5 252.2,529.5 221.9,534.6" fill="#fa4c08" stroke="#1a0503" stroke-width="2.6" stroke-linejoin="round"/><polygon points="252.2,521.5 281.9,516.5 281.9,524.4 252.2,529.5" fill="#fa4c08" stroke="#1a0503" stroke-width="2.6" stroke-linejoin="round"/><polygon points="281.9,516.5 311.1,511.6 311.0,519.4 281.9,524.4" fill="#fa4c08" stroke="#1a0503" stroke-width="2.6" stroke-linejoin="round"/><polygon points="311.1,511.6 339.7,506.8 339.6,514.6 311.0,519.4" fill="#fa4c08" stroke="#1a0503" stroke-width="2.6" stroke-linejoin="round"/><polygon points="339.7,506.8 367.7,502.1 367.5,509.8 339.6,514.6" fill="#fa4c08" stroke="#1a0503" stroke-width="2.6" stroke-linejoin="round"/><polygon points="367.7,502.1 395.2,497.5 395.0,505.1 367.5,509.8" fill="#fa4c08" stroke="#1a0503" stroke-width="2.6" stroke-linejoin="round"/><polygon points="395.2,497.5 422.1,492.9 421.9,500.5 395.0,505.1" fill="#fa4c08" stroke="#1a0503" stroke-width="2.6" stroke-linejoin="round"/><polygon points="422.1,492.9 448.5,488.5 448.2,496.0 421.9,500.5" fill="#fa4c08" stroke="#1a0503" stroke-width="2.6" stroke-linejoin="round"/><polygon points="448.5,488.5 474.5,484.1 474.1,491.6 448.2,496.0" fill="#fa4c08" stroke="#1a0503" stroke-width="2.6" stroke-linejoin="round"/><polygon points="474.5,484.1 481.6,482.9 481.2,490.4 474.1,491.6" fill="#fa4c08" stroke="#1a0503" stroke-width="2.6" stroke-linejoin="round"/><polygon points="175.3,542.6 206.5,537.3 206.7,545.3 175.4,550.7" fill="#fa4c08" stroke="#1a0503" stroke-width="2.6" stroke-linejoin="round"/><polygon points="206.5,537.3 237.2,532.0 237.2,540.0 206.7,545.3" fill="#fa4c08" stroke="#1a0503" stroke-width="2.6" stroke-linejoin="round"/><polygon points="237.2,532.0 267.2,526.9 267.2,534.9 237.2,540.0" fill="#fa4c08" stroke="#1a0503" stroke-width="2.6" stroke-linejoin="round"/><polygon points="267.2,526.9 296.6,521.9 296.5,529.8 267.2,534.9" fill="#fa4c08" stroke="#1a0503" stroke-width="2.6" stroke-linejoin="round"/><polygon points="296.6,521.9 325.4,517.0 325.3,524.8 296.5,529.8" fill="#fa4c08" stroke="#1a0503" stroke-width="2.6" stroke-linejoin="round"/><polygon points="325.4,517.0 353.6,512.2 353.5,519.9 325.3,524.8" fill="#fa4c08" stroke="#1a0503" stroke-width="2.6" stroke-linejoin="round"/><polygon points="353.6,512.2 381.3,507.4 381.1,515.1 353.5,519.9" fill="#fa4c08" stroke="#1a0503" stroke-width="2.6" stroke-linejoin="round"/><polygon points="381.3,507.4 408.5,502.8 408.3,510.4 381.1,515.1" fill="#fa4c08" stroke="#1a0503" stroke-width="2.6" stroke-linejoin="round"/><polygon points="408.5,502.8 435.1,498.3 434.8,505.8 408.3,510.4" fill="#fa4c08" stroke="#1a0503" stroke-width="2.6" stroke-linejoin="round"/><polygon points="435.1,498.3 461.3,493.8 460.9,501.3 434.8,505.8" fill="#fa4c08" stroke="#1a0503" stroke-width="2.6" stroke-linejoin="round"/><polygon points="461.3,493.8 481.2,490.4 480.9,497.8 460.9,501.3" fill="#fa4c08" stroke="#1a0503" stroke-width="2.6" stroke-linejoin="round"/><polygon points="175.4,550.7 191.1,548.0 191.3,556.1 175.6,558.9" fill="#fa4c08" stroke="#1a0503" stroke-width="2.6" stroke-linejoin="round"/><polygon points="191.1,548.0 222.0,542.7 222.1,550.7 191.3,556.1" fill="#fa4c08" stroke="#1a0503" stroke-width="2.6" stroke-linejoin="round"/><polygon points="222.0,542.7 252.3,537.4 252.3,545.4 222.1,550.7" fill="#fa4c08" stroke="#1a0503" stroke-width="2.6" stroke-linejoin="round"/><polygon points="252.3,537.4 281.9,532.3 281.9,540.2 252.3,545.4" fill="#fa4c08" stroke="#1a0503" stroke-width="2.6" stroke-linejoin="round"/><polygon points="281.9,532.3 311.0,527.3 310.9,535.1 281.9,540.2" fill="#fa4c08" stroke="#1a0503" stroke-width="2.6" stroke-linejoin="round"/><polygon points="311.0,527.3 339.5,522.3 339.3,530.1 310.9,535.1" fill="#fa4c08" stroke="#1a0503" stroke-width="2.6" stroke-linejoin="round"/><polygon points="339.5,522.3 367.4,517.5 367.2,525.2 339.3,530.1" fill="#fa4c08" stroke="#1a0503" stroke-width="2.6" stroke-linejoin="round"/><polygon points="367.4,517.5 394.8,512.7 394.6,520.3 367.2,525.2" fill="#fa4c08" stroke="#1a0503" stroke-width="2.6" stroke-linejoin="round"/><polygon points="394.8,512.7 421.6,508.1 421.4,515.6 394.6,520.3" fill="#fa4c08" stroke="#1a0503" stroke-width="2.6" stroke-linejoin="round"/><polygon points="421.6,508.1 448.0,503.5 447.7,511.0 421.4,515.6" fill="#fa4c08" stroke="#1a0503" stroke-width="2.6" stroke-linejoin="round"/><polygon points="448.0,503.5 473.8,499.0 473.5,506.5 447.7,511.0" fill="#fa4c08" stroke="#1a0503" stroke-width="2.6" stroke-linejoin="round"/><polygon points="473.8,499.0 480.9,497.8 480.6,505.2 473.5,506.5" fill="#fa4c08" stroke="#1a0503" stroke-width="2.6" stroke-linejoin="round"/><g clip-path="url(#opn)"><rect width="645" height="618" fill="#d3d0b9"/><line x1="175.6" y1="558.9" x2="734.9" y2="460.4" stroke="#b02828" stroke-width="1.3"/><polygon points="351.6,448.1 389.4,480.5 388.4,521.4 350.9,486.4" fill="#1a0503" stroke="#1a0503" stroke-width="1.5" stroke-linejoin="round"/><polygon points="351.6,448.1 363.7,458.5 363.5,465.9 351.4,455.3" fill="#b8380e" stroke="#1a0503" stroke-width="1.9" stroke-linejoin="round"/><polygon points="363.7,458.5 376.4,469.3 376.2,476.9 363.5,465.9" fill="#b8380e" stroke="#1a0503" stroke-width="1.9" stroke-linejoin="round"/><polygon points="376.4,469.3 389.4,480.5 389.2,488.2 376.2,476.9" fill="#b8380e" stroke="#1a0503" stroke-width="1.9" stroke-linejoin="round"/><polygon points="351.4,455.3 357.4,460.5 357.3,467.8 351.3,462.5" fill="#b8380e" stroke="#1a0503" stroke-width="1.9" stroke-linejoin="round"/><polygon points="357.4,460.5 369.8,471.3 369.6,478.8 357.3,467.8" fill="#b8380e" stroke="#1a0503" stroke-width="1.9" stroke-linejoin="round"/><polygon points="369.8,471.3 382.8,482.6 382.6,490.3 369.6,478.8" fill="#b8380e" stroke="#1a0503" stroke-width="1.9" stroke-linejoin="round"/><polygon points="382.8,482.6 389.2,488.2 389.0,495.9 382.6,490.3" fill="#b8380e" stroke="#1a0503" stroke-width="1.9" stroke-linejoin="round"/><polygon points="351.3,462.5 363.4,473.2 363.2,480.6 351.2,469.7" fill="#b8380e" stroke="#1a0503" stroke-width="1.9" stroke-linejoin="round"/><polygon points="363.4,473.2 376.1,484.4 375.9,492.0 363.2,480.6" fill="#b8380e" stroke="#1a0503" stroke-width="1.9" stroke-linejoin="round"/><polygon points="376.1,484.4 389.0,495.9 388.8,503.6 375.9,492.0" fill="#b8380e" stroke="#1a0503" stroke-width="1.9" stroke-linejoin="round"/><polygon points="351.2,469.7 357.2,475.1 357.0,482.3 351.1,476.9" fill="#b8380e" stroke="#1a0503" stroke-width="1.9" stroke-linejoin="round"/><polygon points="357.2,475.1 369.5,486.2 369.3,493.6 357.0,482.3" fill="#b8380e" stroke="#1a0503" stroke-width="1.9" stroke-linejoin="round"/><polygon points="369.5,486.2 382.5,497.9 382.3,505.4 369.3,493.6" fill="#b8380e" stroke="#1a0503" stroke-width="1.9" stroke-linejoin="round"/><polygon points="382.5,497.9 388.8,503.6 388.6,511.3 382.3,505.4" fill="#b8380e" stroke="#1a0503" stroke-width="1.9" stroke-linejoin="round"/><polygon points="351.1,476.9 363.1,487.9 363.0,495.2 351.0,484.0" fill="#b8380e" stroke="#1a0503" stroke-width="1.9" stroke-linejoin="round"/><polygon points="363.1,487.9 375.7,499.4 375.6,506.9 363.0,495.2" fill="#b8380e" stroke="#1a0503" stroke-width="1.9" stroke-linejoin="round"/><polygon points="375.7,499.4 388.6,511.3 388.5,518.9 375.6,506.9" fill="#b8380e" stroke="#1a0503" stroke-width="1.9" stroke-linejoin="round"/><polygon points="351.0,484.0 356.9,489.5 356.8,491.9 350.9,486.4" fill="#b8380e" stroke="#1a0503" stroke-width="1.9" stroke-linejoin="round"/><polygon points="356.9,489.5 369.2,501.0 369.1,503.4 356.8,491.9" fill="#b8380e" stroke="#1a0503" stroke-width="1.9" stroke-linejoin="round"/><polygon points="369.2,501.0 382.1,513.0 382.0,515.5 369.1,503.4" fill="#b8380e" stroke="#1a0503" stroke-width="1.9" stroke-linejoin="round"/><polygon points="382.1,513.0 388.5,518.9 388.4,521.4 382.0,515.5" fill="#b8380e" stroke="#1a0503" stroke-width="1.9" stroke-linejoin="round"/></g><polyline points="293.8,538.1 293.9,513.0 300.5,507.0 389.1,492.3 388.4,521.4" fill="none" stroke="#1a0503" stroke-width="2"/><g clip-path="url(#niche)"><polygon points="354.8,422.1 453.7,408.4 451.5,463.0 353.8,478.5" fill="#1a0503" stroke="#1a0503" stroke-width="1.5" stroke-linejoin="round"/><polygon points="354.8,422.1 380.9,418.5 380.7,425.9 354.6,429.6" fill="#93300f" stroke="#1a0503" stroke-width="2.6" stroke-linejoin="round"/><polygon points="380.9,418.5 406.5,415.0 406.3,422.3 380.7,425.9" fill="#93300f" stroke="#1a0503" stroke-width="2.6" stroke-linejoin="round"/><polygon points="406.5,415.0 431.7,411.5 431.4,418.7 406.3,422.3" fill="#93300f" stroke="#1a0503" stroke-width="2.6" stroke-linejoin="round"/><polygon points="431.7,411.5 453.7,408.4 453.4,415.6 431.4,418.7" fill="#93300f" stroke="#1a0503" stroke-width="2.6" stroke-linejoin="round"/><polygon points="354.6,429.6 367.7,427.7 367.6,435.1 354.5,437.0" fill="#93300f" stroke="#1a0503" stroke-width="2.6" stroke-linejoin="round"/><polygon points="367.7,427.7 393.6,424.1 393.4,431.4 367.6,435.1" fill="#93300f" stroke="#1a0503" stroke-width="2.6" stroke-linejoin="round"/><polygon points="393.6,424.1 418.9,420.5 418.7,427.7 393.4,431.4" fill="#93300f" stroke="#1a0503" stroke-width="2.6" stroke-linejoin="round"/><polygon points="418.9,420.5 443.8,417.0 443.5,424.2 418.7,427.7" fill="#93300f" stroke="#1a0503" stroke-width="2.6" stroke-linejoin="round"/><polygon points="443.8,417.0 453.4,415.6 453.1,422.8 443.5,424.2" fill="#93300f" stroke="#1a0503" stroke-width="2.6" stroke-linejoin="round"/><polygon points="354.5,437.0 380.5,433.2 380.4,440.6 354.4,444.4" fill="#93300f" stroke="#1a0503" stroke-width="2.6" stroke-linejoin="round"/><polygon points="380.5,433.2 406.1,429.6 405.9,436.8 380.4,440.6" fill="#93300f" stroke="#1a0503" stroke-width="2.6" stroke-linejoin="round"/><polygon points="406.1,429.6 431.2,425.9 430.9,433.1 405.9,436.8" fill="#93300f" stroke="#1a0503" stroke-width="2.6" stroke-linejoin="round"/><polygon points="431.2,425.9 453.1,422.8 452.9,429.9 430.9,433.1" fill="#93300f" stroke="#1a0503" stroke-width="2.6" stroke-linejoin="round"/><polygon points="354.4,444.4 367.4,442.5 367.3,449.8 354.3,451.7" fill="#93300f" stroke="#1a0503" stroke-width="2.6" stroke-linejoin="round"/><polygon points="367.4,442.5 393.2,438.7 393.0,446.0 367.3,449.8" fill="#93300f" stroke="#1a0503" stroke-width="2.6" stroke-linejoin="round"/><polygon points="393.2,438.7 418.4,435.0 418.2,442.2 393.0,446.0" fill="#93300f" stroke="#1a0503" stroke-width="2.6" stroke-linejoin="round"/><polygon points="418.4,435.0 443.3,431.3 443.0,438.5 418.2,442.2" fill="#93300f" stroke="#1a0503" stroke-width="2.6" stroke-linejoin="round"/><polygon points="443.3,431.3 452.9,429.9 452.6,437.1 443.0,438.5" fill="#93300f" stroke="#1a0503" stroke-width="2.6" stroke-linejoin="round"/><polygon points="354.3,451.7 380.2,447.9 380.0,455.1 354.1,459.1" fill="#93300f" stroke="#1a0503" stroke-width="2.6" stroke-linejoin="round"/><polygon points="380.2,447.9 405.7,444.1 405.4,451.3 380.0,455.1" fill="#93300f" stroke="#1a0503" stroke-width="2.6" stroke-linejoin="round"/><polygon points="405.7,444.1 430.7,440.3 430.4,447.5 405.4,451.3" fill="#93300f" stroke="#1a0503" stroke-width="2.6" stroke-linejoin="round"/><polygon points="430.7,440.3 452.6,437.1 452.3,444.2 430.4,447.5" fill="#93300f" stroke="#1a0503" stroke-width="2.6" stroke-linejoin="round"/><polygon points="354.1,459.1 367.1,457.1 367.0,464.4 354.0,466.4" fill="#93300f" stroke="#1a0503" stroke-width="2.6" stroke-linejoin="round"/><polygon points="367.1,457.1 392.8,453.2 392.6,460.4 367.0,464.4" fill="#93300f" stroke="#1a0503" stroke-width="2.6" stroke-linejoin="round"/><polygon points="392.8,453.2 418.0,449.4 417.8,456.5 392.6,460.4" fill="#93300f" stroke="#1a0503" stroke-width="2.6" stroke-linejoin="round"/><polygon points="418.0,449.4 442.7,445.6 442.5,452.7 417.8,456.5" fill="#93300f" stroke="#1a0503" stroke-width="2.6" stroke-linejoin="round"/><polygon points="442.7,445.6 452.3,444.2 452.0,451.2 442.5,452.7" fill="#93300f" stroke="#1a0503" stroke-width="2.6" stroke-linejoin="round"/><polygon points="354.0,466.4 379.9,462.4 379.7,469.6 353.9,473.7" fill="#93300f" stroke="#1a0503" stroke-width="2.6" stroke-linejoin="round"/><polygon points="379.9,462.4 405.2,458.5 405.0,465.6 379.7,469.6" fill="#93300f" stroke="#1a0503" stroke-width="2.6" stroke-linejoin="round"/><polygon points="405.2,458.5 430.2,454.6 429.9,461.7 405.0,465.6" fill="#93300f" stroke="#1a0503" stroke-width="2.6" stroke-linejoin="round"/><polygon points="430.2,454.6 452.0,451.2 451.7,458.3 429.9,461.7" fill="#93300f" stroke="#1a0503" stroke-width="2.6" stroke-linejoin="round"/><polygon points="353.9,473.7 366.8,471.6 366.7,476.5 353.8,478.5" fill="#93300f" stroke="#1a0503" stroke-width="2.6" stroke-linejoin="round"/><polygon points="366.8,471.6 392.4,467.6 392.3,472.4 366.7,476.5" fill="#93300f" stroke="#1a0503" stroke-width="2.6" stroke-linejoin="round"/><polygon points="392.4,467.6 417.5,463.7 417.4,468.4 392.3,472.4" fill="#93300f" stroke="#1a0503" stroke-width="2.6" stroke-linejoin="round"/><polygon points="417.5,463.7 442.2,459.8 442.0,464.5 417.4,468.4" fill="#93300f" stroke="#1a0503" stroke-width="2.6" stroke-linejoin="round"/><polygon points="442.2,459.8 451.7,458.3 451.5,463.0 442.0,464.5" fill="#93300f" stroke="#1a0503" stroke-width="2.6" stroke-linejoin="round"/><polygon points="363.2,477.0 442.7,464.4 478.1,490.9 394.7,505.2" fill="#1a0503" stroke="#1a0503" stroke-width="1.5" stroke-linejoin="round"/><polygon points="363.2,477.0 386.5,473.3 392.8,478.6 369.3,482.4" fill="#8a2d10" stroke="#1a0503" stroke-width="1.9" stroke-linejoin="round"/><polygon points="386.5,473.3 409.4,469.7 415.9,474.9 392.8,478.6" fill="#8a2d10" stroke="#1a0503" stroke-width="1.9" stroke-linejoin="round"/><polygon points="409.4,469.7 432.0,466.1 438.7,471.2 415.9,474.9" fill="#8a2d10" stroke="#1a0503" stroke-width="1.9" stroke-linejoin="round"/><polygon points="432.0,466.1 442.7,464.4 449.5,469.5 438.7,471.2" fill="#8a2d10" stroke="#1a0503" stroke-width="1.9" stroke-linejoin="round"/><polygon points="369.3,482.4 381.1,480.5 387.4,486.0 375.5,487.9" fill="#8a2d10" stroke="#1a0503" stroke-width="1.9" stroke-linejoin="round"/><polygon points="381.1,480.5 404.4,476.8 411.0,482.2 387.4,486.0" fill="#8a2d10" stroke="#1a0503" stroke-width="1.9" stroke-linejoin="round"/><polygon points="404.4,476.8 427.4,473.1 434.1,478.4 411.0,482.2" fill="#8a2d10" stroke="#1a0503" stroke-width="1.9" stroke-linejoin="round"/><polygon points="427.4,473.1 449.5,469.5 456.5,474.7 434.1,478.4" fill="#8a2d10" stroke="#1a0503" stroke-width="1.9" stroke-linejoin="round"/><polygon points="375.5,487.9 399.2,484.1 405.8,489.6 381.8,493.6" fill="#8a2d10" stroke="#1a0503" stroke-width="1.9" stroke-linejoin="round"/><polygon points="399.2,484.1 422.6,480.3 429.4,485.7 405.8,489.6" fill="#8a2d10" stroke="#1a0503" stroke-width="1.9" stroke-linejoin="round"/><polygon points="422.6,480.3 445.6,476.5 452.6,481.9 429.4,485.7" fill="#8a2d10" stroke="#1a0503" stroke-width="1.9" stroke-linejoin="round"/><polygon points="445.6,476.5 456.5,474.7 463.6,480.1 452.6,481.9" fill="#8a2d10" stroke="#1a0503" stroke-width="1.9" stroke-linejoin="round"/><polygon points="381.8,493.6 393.9,491.6 400.5,497.4 388.3,499.4" fill="#8a2d10" stroke="#1a0503" stroke-width="1.9" stroke-linejoin="round"/><polygon points="393.9,491.6 417.6,487.7 424.5,493.3 400.5,497.4" fill="#8a2d10" stroke="#1a0503" stroke-width="1.9" stroke-linejoin="round"/><polygon points="417.6,487.7 441.0,483.8 448.1,489.4 424.5,493.3" fill="#8a2d10" stroke="#1a0503" stroke-width="1.9" stroke-linejoin="round"/><polygon points="441.0,483.8 463.6,480.1 470.9,485.5 448.1,489.4" fill="#8a2d10" stroke="#1a0503" stroke-width="1.9" stroke-linejoin="round"/><polygon points="388.3,499.4 412.5,495.3 419.2,501.0 394.7,505.2" fill="#8a2d10" stroke="#1a0503" stroke-width="1.9" stroke-linejoin="round"/><polygon points="412.5,495.3 436.4,491.3 443.3,496.9 419.2,501.0" fill="#8a2d10" stroke="#1a0503" stroke-width="1.9" stroke-linejoin="round"/><polygon points="436.4,491.3 459.8,487.4 466.9,492.8 443.3,496.9" fill="#8a2d10" stroke="#1a0503" stroke-width="1.9" stroke-linejoin="round"/><polygon points="459.8,487.4 470.9,485.5 478.1,490.9 466.9,492.8" fill="#8a2d10" stroke="#1a0503" stroke-width="1.9" stroke-linejoin="round"/><polygon points="435.7,410.9 471.3,434.5 468.8,492.5 433.8,465.8" fill="#1a0503" stroke="#1a0503" stroke-width="1.5" stroke-linejoin="round"/><polygon points="435.7,410.9 449.8,420.3 449.5,427.7 435.5,418.1" fill="#a53612" stroke="#1a0503" stroke-width="1.9" stroke-linejoin="round"/><polygon points="449.8,420.3 464.6,430.1 464.3,437.7 449.5,427.7" fill="#a53612" stroke="#1a0503" stroke-width="1.9" stroke-linejoin="round"/><polygon points="464.6,430.1 471.3,434.5 471.0,442.2 464.3,437.7" fill="#a53612" stroke="#1a0503" stroke-width="1.9" stroke-linejoin="round"/><polygon points="435.5,418.1 442.4,422.8 442.2,430.1 435.2,425.4" fill="#a53612" stroke="#1a0503" stroke-width="1.9" stroke-linejoin="round"/><polygon points="442.4,422.8 456.8,432.6 456.5,440.1 442.2,430.1" fill="#a53612" stroke="#1a0503" stroke-width="1.9" stroke-linejoin="round"/><polygon points="456.8,432.6 471.0,442.2 470.6,449.8 456.5,440.1" fill="#a53612" stroke="#1a0503" stroke-width="1.9" stroke-linejoin="round"/><polygon points="435.2,425.4 449.2,435.0 449.0,442.4 435.0,432.5" fill="#a53612" stroke="#1a0503" stroke-width="1.9" stroke-linejoin="round"/><polygon points="449.2,435.0 464.0,445.2 463.7,452.7 449.0,442.4" fill="#a53612" stroke="#1a0503" stroke-width="1.9" stroke-linejoin="round"/><polygon points="464.0,445.2 470.6,449.8 470.3,457.4 463.7,452.7" fill="#a53612" stroke="#1a0503" stroke-width="1.9" stroke-linejoin="round"/><polygon points="435.0,432.5 441.9,437.4 441.6,444.7 434.7,439.7" fill="#a53612" stroke="#1a0503" stroke-width="1.9" stroke-linejoin="round"/><polygon points="441.9,437.4 456.2,447.5 455.9,454.9 441.6,444.7" fill="#a53612" stroke="#1a0503" stroke-width="1.9" stroke-linejoin="round"/><polygon points="456.2,447.5 470.3,457.4 470.0,465.0 455.9,454.9" fill="#a53612" stroke="#1a0503" stroke-width="1.9" stroke-linejoin="round"/><polygon points="434.7,439.7 448.7,449.7 448.4,457.0 434.5,446.9" fill="#a53612" stroke="#1a0503" stroke-width="1.9" stroke-linejoin="round"/><polygon points="448.7,449.7 463.3,460.2 463.0,467.7 448.4,457.0" fill="#a53612" stroke="#1a0503" stroke-width="1.9" stroke-linejoin="round"/><polygon points="463.3,460.2 470.0,465.0 469.6,472.5 463.0,467.7" fill="#a53612" stroke="#1a0503" stroke-width="1.9" stroke-linejoin="round"/><polygon points="434.5,446.9 441.3,451.9 441.1,459.1 434.2,454.0" fill="#a53612" stroke="#1a0503" stroke-width="1.9" stroke-linejoin="round"/><polygon points="441.3,451.9 455.6,462.3 455.3,469.7 441.1,459.1" fill="#a53612" stroke="#1a0503" stroke-width="1.9" stroke-linejoin="round"/><polygon points="455.6,462.3 469.6,472.5 469.3,480.0 455.3,469.7" fill="#a53612" stroke="#1a0503" stroke-width="1.9" stroke-linejoin="round"/><polygon points="434.2,454.0 448.1,464.3 447.8,471.6 434.0,461.1" fill="#a53612" stroke="#1a0503" stroke-width="1.9" stroke-linejoin="round"/><polygon points="448.1,464.3 462.7,475.1 462.4,482.6 447.8,471.6" fill="#a53612" stroke="#1a0503" stroke-width="1.9" stroke-linejoin="round"/><polygon points="462.7,475.1 469.3,480.0 469.0,487.5 462.4,482.6" fill="#a53612" stroke="#1a0503" stroke-width="1.9" stroke-linejoin="round"/><polygon points="434.0,461.1 440.8,466.3 440.6,471.0 433.8,465.8" fill="#a53612" stroke="#1a0503" stroke-width="1.9" stroke-linejoin="round"/><polygon points="440.8,466.3 455.0,477.0 454.8,481.9 440.6,471.0" fill="#a53612" stroke="#1a0503" stroke-width="1.9" stroke-linejoin="round"/><polygon points="455.0,477.0 469.0,487.5 468.8,492.5 454.8,481.9" fill="#a53612" stroke="#1a0503" stroke-width="1.9" stroke-linejoin="round"/></g><polygon points="405.7,465.0 470.4,454.9 468.8,492.5 404.6,503.5" fill="none" stroke="#1a0503" stroke-width="2"/><polygon points="377.1,401.0 435.8,393.2 464.4,411.4 403.4,420.0" fill="#151515" stroke="#111" stroke-width="1.5" stroke-linejoin="round"/><g clip-path="url(#sink)"><polygon points="382.8,405.1 437.4,397.8 436.9,412.0 382.4,419.6" fill="#f6f6f6" stroke="#222" stroke-width="1.2" stroke-linejoin="round"/><polygon points="437.4,397.8 458.4,411.2 457.8,425.9 436.9,412.0" fill="#b9b9b9" stroke="#222" stroke-width="1.2" stroke-linejoin="round"/></g><line x1="437.1" y1="395.5" x2="462.3" y2="411.5" stroke="#d8d8d8" stroke-width="0.8" stroke-dasharray="1.5,2.5"/><polygon points="330.2,468.2 358.2,463.9 357.9,478.9 330.0,483.3" fill="#303030" stroke="#111" stroke-width="1.4" stroke-linejoin="round"/><polygon points="332.7,470.1 355.7,466.6 355.5,477.0 332.6,480.6" fill="#4a4a4a" stroke="#222" stroke-width="0.8" stroke-linejoin="round"/><polygon points="178.7,425.6 193.2,423.7 189.2,418.9 174.8,420.8" fill="#983214" stroke="#1a0503" stroke-width="1.9" stroke-linejoin="round"/><polygon points="193.2,423.7 207.5,421.8 203.3,417.1 189.2,418.9" fill="#983214" stroke="#1a0503" stroke-width="1.9" stroke-linejoin="round"/><polygon points="207.5,421.8 221.7,419.9 217.4,415.2 203.3,417.1" fill="#983214" stroke="#1a0503" stroke-width="1.9" stroke-linejoin="round"/><polygon points="221.7,419.9 235.8,418.1 231.3,413.4 217.4,415.2" fill="#983214" stroke="#1a0503" stroke-width="1.9" stroke-linejoin="round"/><polygon points="235.8,418.1 249.8,416.2 245.1,411.6 231.3,413.4" fill="#983214" stroke="#1a0503" stroke-width="1.9" stroke-linejoin="round"/><polygon points="249.8,416.2 263.6,414.4 258.8,409.8 245.1,411.6" fill="#983214" stroke="#1a0503" stroke-width="1.9" stroke-linejoin="round"/><polygon points="263.6,414.4 266.6,414.0 261.8,409.4 258.8,409.8" fill="#983214" stroke="#1a0503" stroke-width="1.9" stroke-linejoin="round"/><polygon points="171.7,426.5 257.4,415.2 277.2,434.5 187.7,447.0" fill="#3b4040" stroke="#111" stroke-width="1.6" stroke-linejoin="round"/><g filter="url(#blur1)"><path d="M212.3,433.5 L211.6,432.8 L210.5,432.1 L209.1,431.6 L207.5,431.1 L205.7,430.8 L203.8,430.5 L201.8,430.4 L199.7,430.4 L197.6,430.5 L195.5,430.8 L193.6,431.1 L191.9,431.6 L190.3,432.1 L188.9,432.8 L187.9,433.5 L187.1,434.2 L186.7,435.0 L186.6,435.8 L186.9,436.5 L187.5,437.3 L188.4,438.0 L189.6,438.6 L191.1,439.1 L192.8,439.5 L194.7,439.8 L196.7,440.0 L198.8,440.1 L201.0,440.0 L203.1,439.8 L205.1,439.5 L207.0,439.1 L208.7,438.6 L210.1,438.0 L211.3,437.3 L212.2,436.5 L212.7,435.8 L212.9,435.0 L212.8,434.2 L212.3,433.5Z" fill="none" stroke="#8e9292" stroke-width="4.2" opacity="0.85"/><path d="M253.8,427.4 L252.9,426.7 L251.8,426.1 L250.4,425.6 L248.8,425.1 L247.0,424.8 L245.1,424.5 L243.0,424.4 L241.0,424.4 L238.9,424.5 L237.0,424.8 L235.1,425.1 L233.4,425.6 L231.9,426.1 L230.7,426.7 L229.7,427.4 L229.0,428.1 L228.7,428.9 L228.7,429.6 L229.0,430.4 L229.7,431.1 L230.6,431.8 L231.9,432.3 L233.4,432.9 L235.1,433.3 L237.0,433.6 L239.1,433.8 L241.2,433.8 L243.3,433.8 L245.3,433.6 L247.3,433.3 L249.1,432.9 L250.7,432.4 L252.1,431.8 L253.1,431.1 L253.9,430.4 L254.4,429.6 L254.5,428.9 L254.3,428.1 L253.8,427.4Z" fill="none" stroke="#8e9292" stroke-width="4.2" opacity="0.85"/><line x1="212.9" y1="433.4" x2="228.8" y2="430.8" stroke="#7a7e7c" stroke-width="3"/></g><line x1="189.9" y1="445.1" x2="273.7" y2="433.4" stroke="#222" stroke-width="0.8" stroke-dasharray="2,2"/><line x1="175.8" y1="427.2" x2="256.5" y2="416.6" stroke="#222" stroke-width="0.8" stroke-dasharray="2,2"/><polygon points="220.9,476.4 250.0,472.0 250.2,504.6 221.3,509.3" fill="#262626" stroke="#111" stroke-width="1.0" stroke-linejoin="round"/><polygon points="223.4,478.6 247.6,474.9 247.7,502.5 223.8,506.4" fill="#4c4c4c" stroke="#222" stroke-width="1.0" stroke-linejoin="round"/><polygon points="221.5,527.1 250.5,522.3 250.6,537.2 221.7,542.2" fill="#222" stroke="#111" stroke-width="1.0" stroke-linejoin="round"/><polygon points="223.8,528.9 248.3,524.8 248.4,535.4 223.9,539.7" fill="#555" stroke="#111" stroke-width="0.8" stroke-linejoin="round"/><polygon points="224.1,539.6 226.1,535.0 228.3,537.3 231.6,533.0 235.0,535.6 238.2,529.2 241.6,533.9 244.9,531.3 248.2,534.4 248.2,535.5" fill="#1a1a1a"/><polygon points="333.6,480.5 338.9,473.9 342.9,477.5 347.2,469.5 351.2,475.2 355.3,472.4 355.5,477.0" fill="#1a1a1a"/><polygon points="239.4,312.5 281.3,343.9 281.2,442.0 240.1,401.6" fill="#1a0503" stroke="#1a0503" stroke-width="1.5" stroke-linejoin="round"/><polygon points="239.4,312.5 249.1,319.7 249.1,327.5 239.4,320.0" fill="#b8380e" stroke="#1a0503" stroke-width="1.9" stroke-linejoin="round"/><polygon points="249.1,319.7 259.3,327.4 259.3,335.3 249.1,327.5" fill="#b8380e" stroke="#1a0503" stroke-width="1.9" stroke-linejoin="round"/><polygon points="259.3,327.4 270.1,335.5 270.1,343.6 259.3,335.3" fill="#b8380e" stroke="#1a0503" stroke-width="1.9" stroke-linejoin="round"/><polygon points="270.1,335.5 281.3,343.9 281.3,352.2 270.1,343.6" fill="#b8380e" stroke="#1a0503" stroke-width="1.9" stroke-linejoin="round"/><polygon points="239.4,320.0 244.2,323.7 244.3,331.3 239.5,327.5" fill="#b8380e" stroke="#1a0503" stroke-width="1.9" stroke-linejoin="round"/><polygon points="244.2,323.7 254.2,331.3 254.2,339.2 244.3,331.3" fill="#b8380e" stroke="#1a0503" stroke-width="1.9" stroke-linejoin="round"/><polygon points="254.2,331.3 264.6,339.4 264.6,347.4 254.2,339.2" fill="#b8380e" stroke="#1a0503" stroke-width="1.9" stroke-linejoin="round"/><polygon points="264.6,339.4 275.7,347.9 275.7,356.1 264.6,347.4" fill="#b8380e" stroke="#1a0503" stroke-width="1.9" stroke-linejoin="round"/><polygon points="275.7,347.9 281.3,352.2 281.3,360.5 275.7,356.1" fill="#b8380e" stroke="#1a0503" stroke-width="1.9" stroke-linejoin="round"/><polygon points="239.5,327.5 249.2,335.2 249.2,342.9 239.6,335.1" fill="#b8380e" stroke="#1a0503" stroke-width="1.9" stroke-linejoin="round"/><polygon points="249.2,335.2 259.4,343.2 259.4,351.1 249.2,342.9" fill="#b8380e" stroke="#1a0503" stroke-width="1.9" stroke-linejoin="round"/><polygon points="259.4,343.2 270.1,351.7 270.1,359.8 259.4,351.1" fill="#b8380e" stroke="#1a0503" stroke-width="1.9" stroke-linejoin="round"/><polygon points="270.1,351.7 281.3,360.5 281.3,368.8 270.1,359.8" fill="#b8380e" stroke="#1a0503" stroke-width="1.9" stroke-linejoin="round"/><polygon points="239.6,335.1 244.3,338.9 244.4,346.5 239.6,342.5" fill="#b8380e" stroke="#1a0503" stroke-width="1.9" stroke-linejoin="round"/><polygon points="244.3,338.9 254.2,346.9 254.3,354.7 244.4,346.5" fill="#b8380e" stroke="#1a0503" stroke-width="1.9" stroke-linejoin="round"/><polygon points="254.2,346.9 264.7,355.4 264.7,363.3 254.3,354.7" fill="#b8380e" stroke="#1a0503" stroke-width="1.9" stroke-linejoin="round"/><polygon points="264.7,355.4 275.7,364.3 275.7,372.4 264.7,363.3" fill="#b8380e" stroke="#1a0503" stroke-width="1.9" stroke-linejoin="round"/><polygon points="275.7,364.3 281.3,368.8 281.3,377.1 275.7,372.4" fill="#b8380e" stroke="#1a0503" stroke-width="1.9" stroke-linejoin="round"/><polygon points="239.6,342.5 249.3,350.5 249.3,358.2 239.7,350.0" fill="#b8380e" stroke="#1a0503" stroke-width="1.9" stroke-linejoin="round"/><polygon points="249.3,350.5 259.4,359.0 259.4,366.8 249.3,358.2" fill="#b8380e" stroke="#1a0503" stroke-width="1.9" stroke-linejoin="round"/><polygon points="259.4,359.0 270.1,367.8 270.1,375.8 259.4,366.8" fill="#b8380e" stroke="#1a0503" stroke-width="1.9" stroke-linejoin="round"/><polygon points="270.1,367.8 281.3,377.1 281.2,385.3 270.1,375.8" fill="#b8380e" stroke="#1a0503" stroke-width="1.9" stroke-linejoin="round"/><polygon points="239.7,350.0 244.4,354.0 244.5,361.6 239.8,357.5" fill="#b8380e" stroke="#1a0503" stroke-width="1.9" stroke-linejoin="round"/><polygon points="244.4,354.0 254.3,362.4 254.4,370.1 244.5,361.6" fill="#b8380e" stroke="#1a0503" stroke-width="1.9" stroke-linejoin="round"/><polygon points="254.3,362.4 264.7,371.2 264.7,379.1 254.4,370.1" fill="#b8380e" stroke="#1a0503" stroke-width="1.9" stroke-linejoin="round"/><polygon points="264.7,371.2 275.7,380.6 275.7,388.6 264.7,379.1" fill="#b8380e" stroke="#1a0503" stroke-width="1.9" stroke-linejoin="round"/><polygon points="275.7,380.6 281.2,385.3 281.2,393.5 275.7,388.6" fill="#b8380e" stroke="#1a0503" stroke-width="1.9" stroke-linejoin="round"/><polygon points="239.8,357.5 249.4,365.8 249.4,373.4 239.8,364.9" fill="#b8380e" stroke="#1a0503" stroke-width="1.9" stroke-linejoin="round"/><polygon points="249.4,365.8 259.5,374.6 259.5,382.3 249.4,373.4" fill="#b8380e" stroke="#1a0503" stroke-width="1.9" stroke-linejoin="round"/><polygon points="259.5,374.6 270.1,383.8 270.1,391.8 259.5,382.3" fill="#b8380e" stroke="#1a0503" stroke-width="1.9" stroke-linejoin="round"/><polygon points="270.1,383.8 281.2,393.5 281.2,401.6 270.1,391.8" fill="#b8380e" stroke="#1a0503" stroke-width="1.9" stroke-linejoin="round"/><polygon points="239.8,364.9 244.5,369.1 244.6,376.5 239.9,372.3" fill="#b8380e" stroke="#1a0503" stroke-width="1.9" stroke-linejoin="round"/><polygon points="244.5,369.1 254.4,377.8 254.4,385.5 244.6,376.5" fill="#b8380e" stroke="#1a0503" stroke-width="1.9" stroke-linejoin="round"/><polygon points="254.4,377.8 264.7,387.0 264.8,394.8 254.4,385.5" fill="#b8380e" stroke="#1a0503" stroke-width="1.9" stroke-linejoin="round"/><polygon points="264.7,387.0 275.7,396.7 275.7,404.7 264.8,394.8" fill="#b8380e" stroke="#1a0503" stroke-width="1.9" stroke-linejoin="round"/><polygon points="275.7,396.7 281.2,401.6 281.2,409.8 275.7,404.7" fill="#b8380e" stroke="#1a0503" stroke-width="1.9" stroke-linejoin="round"/><polygon points="239.9,372.3 249.5,380.9 249.5,388.5 239.9,379.6" fill="#b8380e" stroke="#1a0503" stroke-width="1.9" stroke-linejoin="round"/><polygon points="249.5,380.9 259.5,390.1 259.6,397.8 249.5,388.5" fill="#b8380e" stroke="#1a0503" stroke-width="1.9" stroke-linejoin="round"/><polygon points="259.5,390.1 270.1,399.7 270.2,407.6 259.6,397.8" fill="#b8380e" stroke="#1a0503" stroke-width="1.9" stroke-linejoin="round"/><polygon points="270.1,399.7 281.2,409.8 281.2,417.9 270.2,407.6" fill="#b8380e" stroke="#1a0503" stroke-width="1.9" stroke-linejoin="round"/><polygon points="239.9,379.6 244.7,384.0 244.7,391.4 240.0,387.0" fill="#b8380e" stroke="#1a0503" stroke-width="1.9" stroke-linejoin="round"/><polygon points="244.7,384.0 254.5,393.1 254.5,400.7 244.7,391.4" fill="#b8380e" stroke="#1a0503" stroke-width="1.9" stroke-linejoin="round"/><polygon points="254.5,393.1 264.8,402.7 264.8,410.4 254.5,400.7" fill="#b8380e" stroke="#1a0503" stroke-width="1.9" stroke-linejoin="round"/><polygon points="264.8,402.7 275.7,412.7 275.7,420.7 264.8,410.4" fill="#b8380e" stroke="#1a0503" stroke-width="1.9" stroke-linejoin="round"/><polygon points="275.7,412.7 281.2,417.9 281.2,425.9 275.7,420.7" fill="#b8380e" stroke="#1a0503" stroke-width="1.9" stroke-linejoin="round"/><polygon points="240.0,387.0 249.5,396.0 249.6,403.5 240.0,394.3" fill="#b8380e" stroke="#1a0503" stroke-width="1.9" stroke-linejoin="round"/><polygon points="249.5,396.0 259.6,405.5 259.6,413.2 249.6,403.5" fill="#b8380e" stroke="#1a0503" stroke-width="1.9" stroke-linejoin="round"/><polygon points="259.6,405.5 270.2,415.5 270.2,423.4 259.6,413.2" fill="#b8380e" stroke="#1a0503" stroke-width="1.9" stroke-linejoin="round"/><polygon points="270.2,415.5 281.2,425.9 281.2,434.0 270.2,423.4" fill="#b8380e" stroke="#1a0503" stroke-width="1.9" stroke-linejoin="round"/><polygon points="240.0,394.3 244.8,398.8 244.8,406.2 240.1,401.6" fill="#b8380e" stroke="#1a0503" stroke-width="1.9" stroke-linejoin="round"/><polygon points="244.8,398.8 254.5,408.3 254.6,415.8 244.8,406.2" fill="#b8380e" stroke="#1a0503" stroke-width="1.9" stroke-linejoin="round"/><polygon points="254.5,408.3 264.8,418.2 264.8,425.9 254.6,415.8" fill="#b8380e" stroke="#1a0503" stroke-width="1.9" stroke-linejoin="round"/><polygon points="264.8,418.2 275.7,428.7 275.7,436.6 264.8,425.9" fill="#b8380e" stroke="#1a0503" stroke-width="1.9" stroke-linejoin="round"/><polygon points="275.7,428.7 281.2,434.0 281.2,442.0 275.7,436.6" fill="#b8380e" stroke="#1a0503" stroke-width="1.9" stroke-linejoin="round"/><polygon points="241.8,329.7 245.7,332.8 245.8,346.3 241.9,343.1" fill="#252525" stroke="#111" stroke-width="1.2" stroke-linejoin="round"/><polygon points="281.3,343.9 410.5,329.9 407.7,424.0 281.2,442.0" fill="#1a0503" stroke="#1a0503" stroke-width="1.5" stroke-linejoin="round"/><polygon points="281.3,343.9 311.5,340.6 311.4,348.9 281.3,352.2" fill="#fa4c08" stroke="#1a0503" stroke-width="2.6" stroke-linejoin="round"/><polygon points="311.5,340.6 341.0,337.4 340.9,345.6 311.4,348.9" fill="#fa4c08" stroke="#1a0503" stroke-width="2.6" stroke-linejoin="round"/><polygon points="341.0,337.4 369.9,334.3 369.8,342.4 340.9,345.6" fill="#fa4c08" stroke="#1a0503" stroke-width="2.6" stroke-linejoin="round"/><polygon points="369.9,334.3 398.3,331.2 398.1,339.2 369.8,342.4" fill="#fa4c08" stroke="#1a0503" stroke-width="2.6" stroke-linejoin="round"/><polygon points="398.3,331.2 410.5,329.9 410.3,337.9 398.1,339.2" fill="#fa4c08" stroke="#1a0503" stroke-width="2.6" stroke-linejoin="round"/><polygon points="281.3,352.2 296.4,350.5 296.4,358.8 281.3,360.5" fill="#fa4c08" stroke="#1a0503" stroke-width="2.6" stroke-linejoin="round"/><polygon points="296.4,350.5 326.2,347.2 326.1,355.4 296.4,358.8" fill="#fa4c08" stroke="#1a0503" stroke-width="2.6" stroke-linejoin="round"/><polygon points="326.2,347.2 355.4,344.0 355.3,352.1 326.1,355.4" fill="#fa4c08" stroke="#1a0503" stroke-width="2.6" stroke-linejoin="round"/><polygon points="355.4,344.0 384.0,340.8 383.8,348.8 355.3,352.1" fill="#fa4c08" stroke="#1a0503" stroke-width="2.6" stroke-linejoin="round"/><polygon points="384.0,340.8 410.3,337.9 410.0,345.8 383.8,348.8" fill="#fa4c08" stroke="#1a0503" stroke-width="2.6" stroke-linejoin="round"/><polygon points="281.3,360.5 311.3,357.1 311.3,365.3 281.3,368.8" fill="#fa4c08" stroke="#1a0503" stroke-width="2.6" stroke-linejoin="round"/><polygon points="311.3,357.1 340.8,353.7 340.7,361.9 311.3,365.3" fill="#fa4c08" stroke="#1a0503" stroke-width="2.6" stroke-linejoin="round"/><polygon points="340.8,353.7 369.6,350.5 369.4,358.5 340.7,361.9" fill="#fa4c08" stroke="#1a0503" stroke-width="2.6" stroke-linejoin="round"/><polygon points="369.6,350.5 397.9,347.2 397.7,355.2 369.4,358.5" fill="#fa4c08" stroke="#1a0503" stroke-width="2.6" stroke-linejoin="round"/><polygon points="397.9,347.2 410.0,345.8 409.8,353.8 397.7,355.2" fill="#fa4c08" stroke="#1a0503" stroke-width="2.6" stroke-linejoin="round"/><polygon points="281.3,368.8 296.3,367.1 296.3,375.3 281.3,377.1" fill="#fa4c08" stroke="#1a0503" stroke-width="2.6" stroke-linejoin="round"/><polygon points="296.3,367.1 326.0,363.6 325.9,371.7 296.3,375.3" fill="#fa4c08" stroke="#1a0503" stroke-width="2.6" stroke-linejoin="round"/><polygon points="326.0,363.6 355.1,360.2 355.0,368.2 325.9,371.7" fill="#fa4c08" stroke="#1a0503" stroke-width="2.6" stroke-linejoin="round"/><polygon points="355.1,360.2 383.6,356.8 383.4,364.8 355.0,368.2" fill="#fa4c08" stroke="#1a0503" stroke-width="2.6" stroke-linejoin="round"/><polygon points="383.6,356.8 409.8,353.8 409.6,361.7 383.4,364.8" fill="#fa4c08" stroke="#1a0503" stroke-width="2.6" stroke-linejoin="round"/><polygon points="281.3,377.1 311.2,373.5 311.1,381.6 281.2,385.3" fill="#fa4c08" stroke="#1a0503" stroke-width="2.6" stroke-linejoin="round"/><polygon points="311.2,373.5 340.5,370.0 340.4,378.0 311.1,381.6" fill="#fa4c08" stroke="#1a0503" stroke-width="2.6" stroke-linejoin="round"/><polygon points="340.5,370.0 369.3,366.5 369.1,374.5 340.4,378.0" fill="#fa4c08" stroke="#1a0503" stroke-width="2.6" stroke-linejoin="round"/><polygon points="369.3,366.5 397.4,363.1 397.2,371.1 369.1,374.5" fill="#fa4c08" stroke="#1a0503" stroke-width="2.6" stroke-linejoin="round"/><polygon points="397.4,363.1 409.6,361.7 409.3,369.6 397.2,371.1" fill="#fa4c08" stroke="#1a0503" stroke-width="2.6" stroke-linejoin="round"/><polygon points="281.2,385.3 296.3,383.4 296.2,391.6 281.2,393.5" fill="#fa4c08" stroke="#1a0503" stroke-width="2.6" stroke-linejoin="round"/><polygon points="296.3,383.4 325.9,379.8 325.8,387.9 296.2,391.6" fill="#fa4c08" stroke="#1a0503" stroke-width="2.6" stroke-linejoin="round"/><polygon points="325.9,379.8 354.8,376.3 354.7,384.3 325.8,387.9" fill="#fa4c08" stroke="#1a0503" stroke-width="2.6" stroke-linejoin="round"/><polygon points="354.8,376.3 383.2,372.8 383.1,380.7 354.7,384.3" fill="#fa4c08" stroke="#1a0503" stroke-width="2.6" stroke-linejoin="round"/><polygon points="383.2,372.8 409.3,369.6 409.1,377.4 383.1,380.7" fill="#fa4c08" stroke="#1a0503" stroke-width="2.6" stroke-linejoin="round"/><polygon points="281.2,393.5 311.1,389.7 311.0,397.8 281.2,401.6" fill="#fa4c08" stroke="#1a0503" stroke-width="2.6" stroke-linejoin="round"/><polygon points="311.1,389.7 340.3,386.1 340.2,394.1 311.0,397.8" fill="#fa4c08" stroke="#1a0503" stroke-width="2.6" stroke-linejoin="round"/><polygon points="340.3,386.1 369.0,382.5 368.8,390.4 340.2,394.1" fill="#fa4c08" stroke="#1a0503" stroke-width="2.6" stroke-linejoin="round"/><polygon points="369.0,382.5 397.0,378.9 396.8,386.8 368.8,390.4" fill="#fa4c08" stroke="#1a0503" stroke-width="2.6" stroke-linejoin="round"/><polygon points="397.0,378.9 409.1,377.4 408.9,385.3 396.8,386.8" fill="#fa4c08" stroke="#1a0503" stroke-width="2.6" stroke-linejoin="round"/><polygon points="281.2,401.6 296.2,399.7 296.2,407.8 281.2,409.8" fill="#fa4c08" stroke="#1a0503" stroke-width="2.6" stroke-linejoin="round"/><polygon points="296.2,399.7 325.7,395.9 325.6,403.9 296.2,407.8" fill="#fa4c08" stroke="#1a0503" stroke-width="2.6" stroke-linejoin="round"/><polygon points="325.7,395.9 354.6,392.2 354.4,400.2 325.6,403.9" fill="#fa4c08" stroke="#1a0503" stroke-width="2.6" stroke-linejoin="round"/><polygon points="354.6,392.2 382.9,388.6 382.7,396.5 354.4,400.2" fill="#fa4c08" stroke="#1a0503" stroke-width="2.6" stroke-linejoin="round"/><polygon points="382.9,388.6 408.9,385.3 408.6,393.1 382.7,396.5" fill="#fa4c08" stroke="#1a0503" stroke-width="2.6" stroke-linejoin="round"/><polygon points="281.2,409.8 311.0,405.9 310.9,413.9 281.2,417.9" fill="#fa4c08" stroke="#1a0503" stroke-width="2.6" stroke-linejoin="round"/><polygon points="311.0,405.9 340.1,402.0 340.0,410.0 310.9,413.9" fill="#fa4c08" stroke="#1a0503" stroke-width="2.6" stroke-linejoin="round"/><polygon points="340.1,402.0 368.6,398.3 368.5,406.2 340.0,410.0" fill="#fa4c08" stroke="#1a0503" stroke-width="2.6" stroke-linejoin="round"/><polygon points="368.6,398.3 396.6,394.6 396.4,402.4 368.5,406.2" fill="#fa4c08" stroke="#1a0503" stroke-width="2.6" stroke-linejoin="round"/><polygon points="396.6,394.6 408.6,393.1 408.4,400.8 396.4,402.4" fill="#fa4c08" stroke="#1a0503" stroke-width="2.6" stroke-linejoin="round"/><polygon points="281.2,417.9 296.1,415.9 296.1,423.9 281.2,425.9" fill="#fa4c08" stroke="#1a0503" stroke-width="2.6" stroke-linejoin="round"/><polygon points="296.1,415.9 325.5,411.9 325.4,419.9 296.1,423.9" fill="#fa4c08" stroke="#1a0503" stroke-width="2.6" stroke-linejoin="round"/><polygon points="325.5,411.9 354.3,408.1 354.2,416.0 325.4,419.9" fill="#fa4c08" stroke="#1a0503" stroke-width="2.6" stroke-linejoin="round"/><polygon points="354.3,408.1 382.5,404.3 382.3,412.1 354.2,416.0" fill="#fa4c08" stroke="#1a0503" stroke-width="2.6" stroke-linejoin="round"/><polygon points="382.5,404.3 408.4,400.8 408.2,408.6 382.3,412.1" fill="#fa4c08" stroke="#1a0503" stroke-width="2.6" stroke-linejoin="round"/><polygon points="281.2,425.9 310.8,421.9 310.8,429.9 281.2,434.0" fill="#fa4c08" stroke="#1a0503" stroke-width="2.6" stroke-linejoin="round"/><polygon points="310.8,421.9 339.9,417.9 339.7,425.8 310.8,429.9" fill="#fa4c08" stroke="#1a0503" stroke-width="2.6" stroke-linejoin="round"/><polygon points="339.9,417.9 368.3,414.0 368.1,421.9 339.7,425.8" fill="#fa4c08" stroke="#1a0503" stroke-width="2.6" stroke-linejoin="round"/><polygon points="368.3,414.0 396.2,410.2 396.0,418.0 368.1,421.9" fill="#fa4c08" stroke="#1a0503" stroke-width="2.6" stroke-linejoin="round"/><polygon points="396.2,410.2 408.2,408.6 408.0,416.3 396.0,418.0" fill="#fa4c08" stroke="#1a0503" stroke-width="2.6" stroke-linejoin="round"/><polygon points="281.2,434.0 296.1,431.9 296.0,439.9 281.2,442.0" fill="#fa4c08" stroke="#1a0503" stroke-width="2.6" stroke-linejoin="round"/><polygon points="296.1,431.9 325.3,427.8 325.2,435.7 296.0,439.9" fill="#fa4c08" stroke="#1a0503" stroke-width="2.6" stroke-linejoin="round"/><polygon points="325.3,427.8 354.0,423.8 353.9,431.7 325.2,435.7" fill="#fa4c08" stroke="#1a0503" stroke-width="2.6" stroke-linejoin="round"/><polygon points="354.0,423.8 382.1,419.9 382.0,427.7 353.9,431.7" fill="#fa4c08" stroke="#1a0503" stroke-width="2.6" stroke-linejoin="round"/><polygon points="382.1,419.9 408.0,416.3 407.7,424.0 382.0,427.7" fill="#fa4c08" stroke="#1a0503" stroke-width="2.6" stroke-linejoin="round"/><g clip-path="url(#arch)"><polygon points="238.6,331.0 390.1,315.5 387.8,405.5 239.4,425.5" fill="#141414" stroke="#141414" stroke-width="1.5" stroke-linejoin="round"/><polygon points="238.6,331.0 270.6,327.8 270.6,340.7 238.7,344.2" fill="#fffac2" stroke="#141414" stroke-width="1.8" stroke-linejoin="round"/><polygon points="270.6,327.8 302.0,324.5 301.9,337.4 270.6,340.7" fill="#fffac2" stroke="#141414" stroke-width="1.8" stroke-linejoin="round"/><polygon points="302.0,324.5 332.6,321.4 332.5,334.1 301.9,337.4" fill="#fffac2" stroke="#141414" stroke-width="1.8" stroke-linejoin="round"/><polygon points="332.6,321.4 362.6,318.3 362.4,330.9 332.5,334.1" fill="#fffac2" stroke="#141414" stroke-width="1.8" stroke-linejoin="round"/><polygon points="362.6,318.3 390.1,315.5 389.8,328.0 362.4,330.9" fill="#fffac2" stroke="#141414" stroke-width="1.8" stroke-linejoin="round"/><polygon points="238.7,344.2 254.8,342.4 254.8,355.4 238.8,357.2" fill="#fffac2" stroke="#141414" stroke-width="1.8" stroke-linejoin="round"/><polygon points="254.8,342.4 286.3,339.1 286.3,351.9 254.8,355.4" fill="#fffac2" stroke="#141414" stroke-width="1.8" stroke-linejoin="round"/><polygon points="286.3,339.1 317.3,335.8 317.1,348.5 286.3,351.9" fill="#fffac2" stroke="#141414" stroke-width="1.8" stroke-linejoin="round"/><polygon points="317.3,335.8 347.5,332.5 347.3,345.1 317.1,348.5" fill="#fffac2" stroke="#141414" stroke-width="1.8" stroke-linejoin="round"/><polygon points="347.5,332.5 377.1,329.3 376.9,341.8 347.3,345.1" fill="#fffac2" stroke="#141414" stroke-width="1.8" stroke-linejoin="round"/><polygon points="377.1,329.3 389.8,328.0 389.5,340.4 376.9,341.8" fill="#fffac2" stroke="#141414" stroke-width="1.8" stroke-linejoin="round"/><polygon points="238.8,357.2 270.7,353.7 270.7,366.5 238.9,370.2" fill="#fffac2" stroke="#141414" stroke-width="1.8" stroke-linejoin="round"/><polygon points="270.7,353.7 301.8,350.2 301.7,362.9 270.7,366.5" fill="#fffac2" stroke="#141414" stroke-width="1.8" stroke-linejoin="round"/><polygon points="301.8,350.2 332.3,346.8 332.1,359.4 301.7,362.9" fill="#fffac2" stroke="#141414" stroke-width="1.8" stroke-linejoin="round"/><polygon points="332.3,346.8 362.2,343.5 361.9,355.9 332.1,359.4" fill="#fffac2" stroke="#141414" stroke-width="1.8" stroke-linejoin="round"/><polygon points="362.2,343.5 389.5,340.4 389.2,352.8 361.9,355.9" fill="#fffac2" stroke="#141414" stroke-width="1.8" stroke-linejoin="round"/><polygon points="238.9,370.2 254.9,368.3 255.0,381.1 239.0,383.1" fill="#fffac2" stroke="#141414" stroke-width="1.8" stroke-linejoin="round"/><polygon points="254.9,368.3 286.3,364.7 286.3,377.4 255.0,381.1" fill="#fffac2" stroke="#141414" stroke-width="1.8" stroke-linejoin="round"/><polygon points="286.3,364.7 317.0,361.1 316.9,373.7 286.3,377.4" fill="#fffac2" stroke="#141414" stroke-width="1.8" stroke-linejoin="round"/><polygon points="317.0,361.1 347.1,357.6 346.9,370.1 316.9,373.7" fill="#fffac2" stroke="#141414" stroke-width="1.8" stroke-linejoin="round"/><polygon points="347.1,357.6 376.6,354.2 376.3,366.6 346.9,370.1" fill="#fffac2" stroke="#141414" stroke-width="1.8" stroke-linejoin="round"/><polygon points="376.6,354.2 389.2,352.8 388.9,365.0 376.3,366.6" fill="#fffac2" stroke="#141414" stroke-width="1.8" stroke-linejoin="round"/><polygon points="239.0,383.1 270.7,379.3 270.7,391.9 239.1,395.9" fill="#fffac2" stroke="#141414" stroke-width="1.8" stroke-linejoin="round"/><polygon points="270.7,379.3 301.7,375.5 301.6,388.1 270.7,391.9" fill="#fffac2" stroke="#141414" stroke-width="1.8" stroke-linejoin="round"/><polygon points="301.7,375.5 332.0,371.9 331.8,384.3 301.6,388.1" fill="#fffac2" stroke="#141414" stroke-width="1.8" stroke-linejoin="round"/><polygon points="332.0,371.9 361.7,368.3 361.5,380.6 331.8,384.3" fill="#fffac2" stroke="#141414" stroke-width="1.8" stroke-linejoin="round"/><polygon points="361.7,368.3 388.9,365.0 388.5,377.3 361.5,380.6" fill="#fffac2" stroke="#141414" stroke-width="1.8" stroke-linejoin="round"/><polygon points="239.1,395.9 255.0,393.9 255.1,406.6 239.3,408.6" fill="#fffac2" stroke="#141414" stroke-width="1.8" stroke-linejoin="round"/><polygon points="255.0,393.9 286.2,390.0 286.2,402.6 255.1,406.6" fill="#fffac2" stroke="#141414" stroke-width="1.8" stroke-linejoin="round"/><polygon points="286.2,390.0 316.8,386.2 316.7,398.6 286.2,402.6" fill="#fffac2" stroke="#141414" stroke-width="1.8" stroke-linejoin="round"/><polygon points="316.8,386.2 346.7,382.5 346.5,394.8 316.7,398.6" fill="#fffac2" stroke="#141414" stroke-width="1.8" stroke-linejoin="round"/><polygon points="346.7,382.5 376.0,378.8 375.8,391.0 346.5,394.8" fill="#fffac2" stroke="#141414" stroke-width="1.8" stroke-linejoin="round"/><polygon points="376.0,378.8 388.5,377.3 388.2,389.4 375.8,391.0" fill="#fffac2" stroke="#141414" stroke-width="1.8" stroke-linejoin="round"/><polygon points="239.3,408.6 270.7,404.6 270.7,417.1 239.4,421.3" fill="#fffac2" stroke="#141414" stroke-width="1.8" stroke-linejoin="round"/><polygon points="270.7,404.6 301.5,400.6 301.5,413.0 270.7,417.1" fill="#fffac2" stroke="#141414" stroke-width="1.8" stroke-linejoin="round"/><polygon points="301.5,400.6 331.7,396.7 331.5,409.0 301.5,413.0" fill="#fffac2" stroke="#141414" stroke-width="1.8" stroke-linejoin="round"/><polygon points="331.7,396.7 361.2,392.9 361.0,405.1 331.5,409.0" fill="#fffac2" stroke="#141414" stroke-width="1.8" stroke-linejoin="round"/><polygon points="361.2,392.9 388.2,389.4 387.9,401.5 361.0,405.1" fill="#fffac2" stroke="#141414" stroke-width="1.8" stroke-linejoin="round"/><polygon points="239.4,421.3 255.1,419.2 255.2,423.4 239.4,425.5" fill="#fffac2" stroke="#141414" stroke-width="1.8" stroke-linejoin="round"/><polygon points="255.1,419.2 286.2,415.1 286.2,419.2 255.2,423.4" fill="#fffac2" stroke="#141414" stroke-width="1.8" stroke-linejoin="round"/><polygon points="286.2,415.1 316.6,411.0 316.5,415.1 286.2,419.2" fill="#fffac2" stroke="#141414" stroke-width="1.8" stroke-linejoin="round"/><polygon points="316.6,411.0 346.3,407.0 346.3,411.1 316.5,415.1" fill="#fffac2" stroke="#141414" stroke-width="1.8" stroke-linejoin="round"/><polygon points="346.3,407.0 375.5,403.2 375.4,407.2 346.3,411.1" fill="#fffac2" stroke="#141414" stroke-width="1.8" stroke-linejoin="round"/><polygon points="375.5,403.2 387.9,401.5 387.8,405.5 375.4,407.2" fill="#fffac2" stroke="#141414" stroke-width="1.8" stroke-linejoin="round"/><polygon points="360.6,318.5 385.0,332.6 382.7,427.6 359.0,409.4" fill="#141414" stroke="#141414" stroke-width="1.5" stroke-linejoin="round"/><polygon points="360.6,318.5 370.1,324.0 369.8,336.8 360.4,331.1" fill="#d8cb90" stroke="#141414" stroke-width="1.8" stroke-linejoin="round"/><polygon points="370.1,324.0 379.9,329.7 379.6,342.8 369.8,336.8" fill="#d8cb90" stroke="#141414" stroke-width="1.8" stroke-linejoin="round"/><polygon points="379.9,329.7 385.0,332.6 384.7,345.8 379.6,342.8" fill="#d8cb90" stroke="#141414" stroke-width="1.8" stroke-linejoin="round"/><polygon points="360.4,331.1 365.1,334.0 364.8,346.6 360.2,343.7" fill="#d8cb90" stroke="#141414" stroke-width="1.8" stroke-linejoin="round"/><polygon points="365.1,334.0 374.7,339.8 374.4,352.7 364.8,346.6" fill="#d8cb90" stroke="#141414" stroke-width="1.8" stroke-linejoin="round"/><polygon points="374.7,339.8 384.7,345.8 384.3,358.9 374.4,352.7" fill="#d8cb90" stroke="#141414" stroke-width="1.8" stroke-linejoin="round"/><polygon points="360.2,343.7 369.6,349.6 369.3,362.3 360.0,356.1" fill="#d8cb90" stroke="#141414" stroke-width="1.8" stroke-linejoin="round"/><polygon points="369.6,349.6 379.3,355.8 379.0,368.7 369.3,362.3" fill="#d8cb90" stroke="#141414" stroke-width="1.8" stroke-linejoin="round"/><polygon points="379.3,355.8 384.3,358.9 384.0,372.0 379.0,368.7" fill="#d8cb90" stroke="#141414" stroke-width="1.8" stroke-linejoin="round"/><polygon points="360.0,356.1 364.6,359.2 364.3,371.7 359.7,368.5" fill="#d8cb90" stroke="#141414" stroke-width="1.8" stroke-linejoin="round"/><polygon points="364.6,359.2 374.1,365.5 373.9,378.2 364.3,371.7" fill="#d8cb90" stroke="#141414" stroke-width="1.8" stroke-linejoin="round"/><polygon points="374.1,365.5 384.0,372.0 383.7,384.9 373.9,378.2" fill="#d8cb90" stroke="#141414" stroke-width="1.8" stroke-linejoin="round"/><polygon points="359.7,368.5 369.1,374.9 368.8,387.5 359.5,380.9" fill="#d8cb90" stroke="#141414" stroke-width="1.8" stroke-linejoin="round"/><polygon points="369.1,374.9 378.7,381.5 378.5,394.3 368.8,387.5" fill="#d8cb90" stroke="#141414" stroke-width="1.8" stroke-linejoin="round"/><polygon points="378.7,381.5 383.7,384.9 383.4,397.8 378.5,394.3" fill="#d8cb90" stroke="#141414" stroke-width="1.8" stroke-linejoin="round"/><polygon points="359.5,380.9 364.1,384.1 363.9,396.5 359.3,393.2" fill="#d8cb90" stroke="#141414" stroke-width="1.8" stroke-linejoin="round"/><polygon points="364.1,384.1 373.6,390.8 373.3,403.4 363.9,396.5" fill="#d8cb90" stroke="#141414" stroke-width="1.8" stroke-linejoin="round"/><polygon points="373.6,390.8 383.4,397.8 383.1,410.6 373.3,403.4" fill="#d8cb90" stroke="#141414" stroke-width="1.8" stroke-linejoin="round"/><polygon points="359.3,393.2 368.5,399.9 368.3,412.3 359.1,405.4" fill="#d8cb90" stroke="#141414" stroke-width="1.8" stroke-linejoin="round"/><polygon points="368.5,399.9 378.2,407.0 377.9,419.6 368.3,412.3" fill="#d8cb90" stroke="#141414" stroke-width="1.8" stroke-linejoin="round"/><polygon points="378.2,407.0 383.1,410.6 382.8,423.3 377.9,419.6" fill="#d8cb90" stroke="#141414" stroke-width="1.8" stroke-linejoin="round"/><polygon points="359.1,405.4 363.6,408.8 363.5,412.9 359.0,409.4" fill="#d8cb90" stroke="#141414" stroke-width="1.8" stroke-linejoin="round"/><polygon points="363.6,408.8 373.0,415.9 373.0,420.1 363.5,412.9" fill="#d8cb90" stroke="#141414" stroke-width="1.8" stroke-linejoin="round"/><polygon points="373.0,415.9 382.8,423.3 382.7,427.6 373.0,420.1" fill="#d8cb90" stroke="#141414" stroke-width="1.8" stroke-linejoin="round"/><polygon points="260.4,422.7 359.0,409.4 382.7,427.6 280.1,442.1" fill="#1a0503" stroke="#1a0503" stroke-width="1.5" stroke-linejoin="round"/><polygon points="296.3,428.5 345.6,421.7 345.6,421.7 296.3,428.5" fill="#8a2e12" stroke="#1a0503" stroke-width="2.3" stroke-linejoin="round"/><polygon points="280.1,442.1 294.7,440.1 284.3,430.2 270.0,432.2" fill="#983214" stroke="#1a0503" stroke-width="2.3" stroke-linejoin="round"/><polygon points="294.7,440.1 309.1,438.0 298.4,428.2 284.3,430.2" fill="#983214" stroke="#1a0503" stroke-width="2.3" stroke-linejoin="round"/><polygon points="309.1,438.0 323.4,436.0 312.4,426.3 298.4,428.2" fill="#983214" stroke="#1a0503" stroke-width="2.3" stroke-linejoin="round"/><polygon points="323.4,436.0 337.5,434.0 326.3,424.4 312.4,426.3" fill="#983214" stroke="#1a0503" stroke-width="2.3" stroke-linejoin="round"/><polygon points="337.5,434.0 351.6,432.0 340.0,422.5 326.3,424.4" fill="#983214" stroke="#1a0503" stroke-width="2.3" stroke-linejoin="round"/><polygon points="351.6,432.0 365.4,430.0 353.6,420.6 340.0,422.5" fill="#983214" stroke="#1a0503" stroke-width="2.3" stroke-linejoin="round"/><polygon points="365.4,430.0 379.2,428.1 367.1,418.7 353.6,420.6" fill="#983214" stroke="#1a0503" stroke-width="2.3" stroke-linejoin="round"/><polygon points="379.2,428.1 382.7,427.6 370.6,418.3 367.1,418.7" fill="#983214" stroke="#1a0503" stroke-width="2.3" stroke-linejoin="round"/><polygon points="272.4,420.5 373.7,406.9 373.4,420.5 272.4,434.5" fill="#fdf8c6" stroke="#141414" stroke-width="1.6" stroke-linejoin="round"/><polygon points="277.7,422.8 280.5,422.5 280.5,430.2 277.7,430.6" fill="#141414"/><polygon points="287.3,421.5 290.0,421.2 290.0,428.9 287.3,429.2" fill="#141414"/><polygon points="296.8,420.2 299.5,419.9 299.5,427.6 296.8,427.9" fill="#141414"/><polygon points="306.2,419.0 309.0,418.6 308.9,426.3 306.2,426.6" fill="#141414"/><polygon points="315.6,417.7 318.3,417.3 318.2,425.0 315.6,425.3" fill="#141414"/><polygon points="324.9,416.4 327.6,416.1 327.5,423.7 324.9,424.1" fill="#141414"/><polygon points="334.2,415.2 336.9,414.8 336.8,422.4 334.1,422.8" fill="#141414"/><polygon points="343.4,413.9 346.1,413.6 345.9,421.1 343.3,421.5" fill="#141414"/><polygon points="352.6,412.7 355.2,412.3 355.0,419.9 352.4,420.2" fill="#141414"/><polygon points="361.6,411.5 364.2,411.1 364.1,418.6 361.5,419.0" fill="#141414"/><polygon points="370.7,410.2 373.3,409.9 373.1,417.4 370.5,417.8" fill="#141414"/><line x1="272.4" y1="423.6" x2="373.7" y2="409.8" stroke="#141414" stroke-width="1.4"/><polygon points="272.4,431.3 373.5,417.3 373.4,421.5 272.4,435.6" fill="#141414"/><polygon points="373.7,409.8 372.6,409.0 372.4,419.7 373.4,420.5" fill="#141414"/><polygon points="370.1,407.2 369.0,406.4 368.8,416.9 369.9,417.7" fill="#141414"/><polygon points="366.5,404.5 365.5,403.8 365.3,414.2 366.3,415.0" fill="#141414"/><polygon points="363.1,402.0 362.0,401.2 361.8,411.6 362.9,412.4" fill="#141414"/><polygon points="359.6,399.4 358.6,398.7 358.4,409.0 359.4,409.8" fill="#141414"/></g><polygon points="383.9,379.3 395.9,369.4 394.4,367.2 392.8,365.2 391.1,363.2 380.2,374.5" fill="#fa4c08" stroke="#1a0503" stroke-width="2.3" stroke-linejoin="round"/><polygon points="380.2,374.5 391.1,363.2 389.3,361.3 387.5,359.5 385.5,357.8 375.8,370.4" fill="#fa4c08" stroke="#1a0503" stroke-width="2.3" stroke-linejoin="round"/><polygon points="375.8,370.4 385.5,357.8 383.5,356.1 381.3,354.6 379.1,353.2 370.9,366.9" fill="#fa4c08" stroke="#1a0503" stroke-width="2.3" stroke-linejoin="round"/><polygon points="370.9,366.9 379.1,353.2 376.9,352.0 374.5,350.8 372.1,349.7 365.4,364.2" fill="#fa4c08" stroke="#1a0503" stroke-width="2.3" stroke-linejoin="round"/><polygon points="365.4,364.2 372.1,349.7 369.6,348.8 367.1,347.9 364.5,347.2 359.6,362.4" fill="#fa4c08" stroke="#1a0503" stroke-width="2.3" stroke-linejoin="round"/><polygon points="359.6,362.4 364.5,347.2 361.9,346.7 359.2,346.2 356.5,345.9 353.4,361.4" fill="#fa4c08" stroke="#1a0503" stroke-width="2.3" stroke-linejoin="round"/><polygon points="353.4,361.4 356.5,345.9 353.8,345.7 351.0,345.6 348.3,345.7 347.0,361.2" fill="#fa4c08" stroke="#1a0503" stroke-width="2.3" stroke-linejoin="round"/><polygon points="347.0,361.2 348.3,345.7 345.5,345.8 342.6,346.2 339.8,346.6 340.6,362.0" fill="#fa4c08" stroke="#1a0503" stroke-width="2.3" stroke-linejoin="round"/><polygon points="340.6,362.0 339.8,346.6 337.0,347.2 334.2,347.9 331.4,348.7 334.1,363.6" fill="#fa4c08" stroke="#1a0503" stroke-width="2.3" stroke-linejoin="round"/><polygon points="334.1,363.6 331.4,348.7 328.6,349.6 325.9,350.7 323.2,351.9 327.8,366.1" fill="#fa4c08" stroke="#1a0503" stroke-width="2.3" stroke-linejoin="round"/><polygon points="327.8,366.1 323.2,351.9 320.5,353.2 317.8,354.7 315.2,356.2 321.7,369.4" fill="#fa4c08" stroke="#1a0503" stroke-width="2.3" stroke-linejoin="round"/><polygon points="321.7,369.4 315.2,356.2 312.7,357.9 310.2,359.6 307.7,361.5 316.0,373.5" fill="#fa4c08" stroke="#1a0503" stroke-width="2.3" stroke-linejoin="round"/><polygon points="316.0,373.5 307.7,361.5 305.4,363.5 303.1,365.5 300.8,367.7 310.7,378.3" fill="#fa4c08" stroke="#1a0503" stroke-width="2.3" stroke-linejoin="round"/><polygon points="310.7,378.3 300.8,367.7 298.7,370.0 296.6,372.3 294.7,374.7 306.0,383.6" fill="#fa4c08" stroke="#1a0503" stroke-width="2.3" stroke-linejoin="round"/><polygon points="306.0,383.6 294.7,374.7 292.8,377.2 291.0,379.8 289.3,382.4 301.9,389.5" fill="#fa4c08" stroke="#1a0503" stroke-width="2.3" stroke-linejoin="round"/><polygon points="301.6,439.1 382.7,427.6 383.9,379.3 382.0,376.6 379.9,374.2 377.6,371.9 375.1,369.8 372.5,367.9 369.7,366.3 366.8,364.8 363.8,363.6 360.6,362.6 357.4,361.9 354.1,361.4 350.7,361.2 347.3,361.2 343.8,361.5 340.3,362.0 336.9,362.8 333.4,363.9 330.0,365.1 326.7,366.7 323.4,368.4 320.3,370.4 317.2,372.6 314.2,375.0 311.4,377.5 308.8,380.3 306.3,383.2 304.0,386.3 301.9,389.5" fill="none" stroke="#1a0503" stroke-width="2"/><path d="M413.9,391.1 L414.4,376.8 Q418.4,375.8 420.4,380.8 L421.4,386.8" fill="none" stroke="#1a1a1a" stroke-width="2.4" stroke-linecap="round"/><path d="M413.9,391.1 L414.4,376.8 Q418.4,375.8 420.4,380.8 L421.4,386.8" fill="none" stroke="#e0e0e0" stroke-width="0.9" stroke-linecap="round"/><polygon points="233.9,304.0 278.5,336.9 278.5,345.7 234.0,311.8" fill="#1a0503" stroke="#1a0503" stroke-width="1.5" stroke-linejoin="round"/><polygon points="233.9,304.0 243.5,311.0 243.5,319.1 234.0,311.8" fill="#b8380e" stroke="#1a0503" stroke-width="1.9" stroke-linejoin="round"/><polygon points="243.5,311.0 253.5,318.4 253.6,326.7 243.5,319.1" fill="#b8380e" stroke="#1a0503" stroke-width="1.9" stroke-linejoin="round"/><polygon points="253.5,318.4 264.1,326.3 264.1,334.7 253.6,326.7" fill="#b8380e" stroke="#1a0503" stroke-width="1.9" stroke-linejoin="round"/><polygon points="264.1,326.3 275.3,334.5 275.3,343.2 264.1,334.7" fill="#b8380e" stroke="#1a0503" stroke-width="1.9" stroke-linejoin="round"/><polygon points="275.3,334.5 278.5,336.9 278.5,345.7 275.3,343.2" fill="#b8380e" stroke="#1a0503" stroke-width="1.9" stroke-linejoin="round"/><polygon points="278.5,336.9 416.9,322.3 416.7,330.6 278.5,345.7" fill="#1a0503" stroke="#1a0503" stroke-width="1.5" stroke-linejoin="round"/><polygon points="278.5,336.9 309.0,333.7 308.9,342.3 278.5,345.7" fill="#fa4c08" stroke="#1a0503" stroke-width="2.6" stroke-linejoin="round"/><polygon points="309.0,333.7 338.7,330.6 338.6,339.1 308.9,342.3" fill="#fa4c08" stroke="#1a0503" stroke-width="2.6" stroke-linejoin="round"/><polygon points="338.7,330.6 367.9,327.5 367.8,335.9 338.6,339.1" fill="#fa4c08" stroke="#1a0503" stroke-width="2.6" stroke-linejoin="round"/><polygon points="367.9,327.5 396.5,324.4 396.3,332.8 367.8,335.9" fill="#fa4c08" stroke="#1a0503" stroke-width="2.6" stroke-linejoin="round"/><polygon points="396.5,324.4 416.9,322.3 416.7,330.6 396.3,332.8" fill="#fa4c08" stroke="#1a0503" stroke-width="2.6" stroke-linejoin="round"/><polygon points="231.4,295.8 277.3,328.9 277.3,337.7 231.5,303.7" fill="#1a0503" stroke="#1a0503" stroke-width="1.5" stroke-linejoin="round"/><polygon points="231.4,295.8 240.9,302.7 241.0,310.7 231.5,303.7" fill="#b8380e" stroke="#1a0503" stroke-width="1.9" stroke-linejoin="round"/><polygon points="240.9,302.7 250.9,309.9 250.9,318.1 241.0,310.7" fill="#b8380e" stroke="#1a0503" stroke-width="1.9" stroke-linejoin="round"/><polygon points="250.9,309.9 261.4,317.5 261.4,325.9 250.9,318.1" fill="#b8380e" stroke="#1a0503" stroke-width="1.9" stroke-linejoin="round"/><polygon points="261.4,317.5 272.5,325.5 272.5,334.2 261.4,325.9" fill="#b8380e" stroke="#1a0503" stroke-width="1.9" stroke-linejoin="round"/><polygon points="272.5,325.5 277.3,328.9 277.3,337.7 272.5,334.2" fill="#b8380e" stroke="#1a0503" stroke-width="1.9" stroke-linejoin="round"/><polygon points="277.3,328.9 420.0,314.2 419.7,322.6 277.3,337.7" fill="#1a0503" stroke="#1a0503" stroke-width="1.5" stroke-linejoin="round"/><polygon points="277.3,328.9 307.9,325.8 307.8,334.5 277.3,337.7" fill="#fa4c08" stroke="#1a0503" stroke-width="2.6" stroke-linejoin="round"/><polygon points="307.9,325.8 337.8,322.7 337.7,331.3 307.8,334.5" fill="#fa4c08" stroke="#1a0503" stroke-width="2.6" stroke-linejoin="round"/><polygon points="337.8,322.7 367.1,319.7 366.9,328.2 337.7,331.3" fill="#fa4c08" stroke="#1a0503" stroke-width="2.6" stroke-linejoin="round"/><polygon points="367.1,319.7 395.8,316.7 395.6,325.1 366.9,328.2" fill="#fa4c08" stroke="#1a0503" stroke-width="2.6" stroke-linejoin="round"/><polygon points="395.8,316.7 420.0,314.2 419.7,322.6 395.6,325.1" fill="#fa4c08" stroke="#1a0503" stroke-width="2.6" stroke-linejoin="round"/><polygon points="231.3,287.9 277.3,320.1 277.3,328.9 231.4,295.8" fill="#1a0503" stroke="#1a0503" stroke-width="1.5" stroke-linejoin="round"/><polygon points="231.3,287.9 240.8,294.6 240.9,302.7 231.4,295.8" fill="#b8380e" stroke="#1a0503" stroke-width="1.9" stroke-linejoin="round"/><polygon points="240.8,294.6 250.8,301.6 250.9,309.9 240.9,302.7" fill="#b8380e" stroke="#1a0503" stroke-width="1.9" stroke-linejoin="round"/><polygon points="250.8,301.6 261.4,309.0 261.4,317.5 250.9,309.9" fill="#b8380e" stroke="#1a0503" stroke-width="1.9" stroke-linejoin="round"/><polygon points="261.4,309.0 272.5,316.8 272.5,325.5 261.4,317.5" fill="#b8380e" stroke="#1a0503" stroke-width="1.9" stroke-linejoin="round"/><polygon points="272.5,316.8 277.3,320.1 277.3,328.9 272.5,325.5" fill="#b8380e" stroke="#1a0503" stroke-width="1.9" stroke-linejoin="round"/><polygon points="277.3,320.1 420.3,305.8 420.0,314.2 277.3,328.9" fill="#1a0503" stroke="#1a0503" stroke-width="1.5" stroke-linejoin="round"/><polygon points="277.3,320.1 307.9,317.1 307.9,325.8 277.3,328.9" fill="#fa4c08" stroke="#1a0503" stroke-width="2.6" stroke-linejoin="round"/><polygon points="307.9,317.1 337.9,314.1 337.8,322.7 307.9,325.8" fill="#fa4c08" stroke="#1a0503" stroke-width="2.6" stroke-linejoin="round"/><polygon points="337.9,314.1 367.3,311.1 367.1,319.7 337.8,322.7" fill="#fa4c08" stroke="#1a0503" stroke-width="2.6" stroke-linejoin="round"/><polygon points="367.3,311.1 396.0,308.2 395.8,316.7 367.1,319.7" fill="#fa4c08" stroke="#1a0503" stroke-width="2.6" stroke-linejoin="round"/><polygon points="396.0,308.2 420.3,305.8 420.0,314.2 395.8,316.7" fill="#fa4c08" stroke="#1a0503" stroke-width="2.6" stroke-linejoin="round"/><polygon points="231.3,287.9 361.2,276.5 420.3,305.8 277.3,320.1" fill="#1a0503" stroke="#1a0503" stroke-width="1.5" stroke-linejoin="round"/><polygon points="265.7,291.7 348.5,284.2 381.8,301.7 294.2,310.2" fill="#983214" stroke="#1a0503" stroke-width="2.3" stroke-linejoin="round"/><polygon points="277.3,320.1 292.4,318.6 281.7,311.4 266.9,312.9" fill="#983214" stroke="#1a0503" stroke-width="2.3" stroke-linejoin="round"/><polygon points="292.4,318.6 307.4,317.1 296.3,310.0 281.7,311.4" fill="#983214" stroke="#1a0503" stroke-width="2.3" stroke-linejoin="round"/><polygon points="307.4,317.1 322.2,315.6 310.8,308.6 296.3,310.0" fill="#983214" stroke="#1a0503" stroke-width="2.3" stroke-linejoin="round"/><polygon points="322.2,315.6 336.8,314.2 325.2,307.2 310.8,308.6" fill="#983214" stroke="#1a0503" stroke-width="2.3" stroke-linejoin="round"/><polygon points="336.8,314.2 351.3,312.7 339.4,305.8 325.2,307.2" fill="#983214" stroke="#1a0503" stroke-width="2.3" stroke-linejoin="round"/><polygon points="351.3,312.7 365.7,311.3 353.5,304.4 339.4,305.8" fill="#983214" stroke="#1a0503" stroke-width="2.3" stroke-linejoin="round"/><polygon points="365.7,311.3 379.9,309.9 367.4,303.1 353.5,304.4" fill="#983214" stroke="#1a0503" stroke-width="2.3" stroke-linejoin="round"/><polygon points="379.9,309.9 394.0,308.4 381.2,301.7 367.4,303.1" fill="#983214" stroke="#1a0503" stroke-width="2.3" stroke-linejoin="round"/><polygon points="394.0,308.4 407.9,307.0 394.8,300.4 381.2,301.7" fill="#983214" stroke="#1a0503" stroke-width="2.3" stroke-linejoin="round"/><polygon points="407.9,307.0 420.3,305.8 407.0,299.2 394.8,300.4" fill="#983214" stroke="#1a0503" stroke-width="2.3" stroke-linejoin="round"/><polygon points="265.7,291.7 279.4,290.4 270.0,284.5 256.5,285.7" fill="#983214" stroke="#1a0503" stroke-width="2.3" stroke-linejoin="round"/><polygon points="279.4,290.4 292.9,289.2 283.3,283.4 270.0,284.5" fill="#983214" stroke="#1a0503" stroke-width="2.3" stroke-linejoin="round"/><polygon points="292.9,289.2 306.4,288.0 296.5,282.2 283.3,283.4" fill="#983214" stroke="#1a0503" stroke-width="2.3" stroke-linejoin="round"/><polygon points="306.4,288.0 319.7,286.8 309.5,281.1 296.5,282.2" fill="#983214" stroke="#1a0503" stroke-width="2.3" stroke-linejoin="round"/><polygon points="319.7,286.8 332.9,285.6 322.5,279.9 309.5,281.1" fill="#983214" stroke="#1a0503" stroke-width="2.3" stroke-linejoin="round"/><polygon points="332.9,285.6 346.0,284.4 335.3,278.8 322.5,279.9" fill="#983214" stroke="#1a0503" stroke-width="2.3" stroke-linejoin="round"/><polygon points="346.0,284.4 358.9,283.3 348.0,277.7 335.3,278.8" fill="#983214" stroke="#1a0503" stroke-width="2.3" stroke-linejoin="round"/><polygon points="358.9,283.3 371.8,282.1 360.7,276.6 348.0,277.7" fill="#983214" stroke="#1a0503" stroke-width="2.3" stroke-linejoin="round"/><polygon points="371.8,282.1 372.3,282.0 361.2,276.5 360.7,276.6" fill="#983214" stroke="#1a0503" stroke-width="2.3" stroke-linejoin="round"/><polygon points="266.9,312.9 294.2,310.2 288.5,306.5 261.5,309.1" fill="#983214" stroke="#1a0503" stroke-width="2.3" stroke-linejoin="round"/><polygon points="261.5,309.1 288.5,306.5 282.9,302.9 256.3,305.4" fill="#983214" stroke="#1a0503" stroke-width="2.3" stroke-linejoin="round"/><polygon points="256.3,305.4 282.9,302.9 277.5,299.4 251.1,301.8" fill="#983214" stroke="#1a0503" stroke-width="2.3" stroke-linejoin="round"/><polygon points="251.1,301.8 277.5,299.4 272.2,295.9 246.2,298.3" fill="#983214" stroke="#1a0503" stroke-width="2.3" stroke-linejoin="round"/><polygon points="246.2,298.3 272.2,295.9 267.1,292.6 241.3,294.9" fill="#983214" stroke="#1a0503" stroke-width="2.3" stroke-linejoin="round"/><polygon points="241.3,294.9 267.1,292.6 262.1,289.3 236.5,291.6" fill="#983214" stroke="#1a0503" stroke-width="2.3" stroke-linejoin="round"/><polygon points="236.5,291.6 262.1,289.3 257.2,286.1 231.9,288.4" fill="#983214" stroke="#1a0503" stroke-width="2.3" stroke-linejoin="round"/><polygon points="231.9,288.4 257.2,286.1 256.5,285.7 231.3,287.9" fill="#983214" stroke="#1a0503" stroke-width="2.3" stroke-linejoin="round"/><polygon points="381.8,301.7 407.0,299.2 400.1,295.8 375.1,298.2" fill="#983214" stroke="#1a0503" stroke-width="2.3" stroke-linejoin="round"/><polygon points="375.1,298.2 400.1,295.8 393.3,292.5 368.7,294.8" fill="#983214" stroke="#1a0503" stroke-width="2.3" stroke-linejoin="round"/><polygon points="368.7,294.8 393.3,292.5 386.7,289.2 362.3,291.5" fill="#983214" stroke="#1a0503" stroke-width="2.3" stroke-linejoin="round"/><polygon points="362.3,291.5 386.7,289.2 380.3,286.0 356.2,288.2" fill="#983214" stroke="#1a0503" stroke-width="2.3" stroke-linejoin="round"/><polygon points="356.2,288.2 380.3,286.0 374.1,282.9 350.1,285.1" fill="#983214" stroke="#1a0503" stroke-width="2.3" stroke-linejoin="round"/><polygon points="350.1,285.1 374.1,282.9 372.3,282.0 348.5,284.2" fill="#983214" stroke="#1a0503" stroke-width="2.3" stroke-linejoin="round"/><polygon points="256.1,277.3 292.0,299.8 291.9,308.6 256.1,285.3" fill="#1a0503" stroke="#1a0503" stroke-width="1.5" stroke-linejoin="round"/><polygon points="256.1,277.3 266.1,283.6 266.2,291.8 256.1,285.3" fill="#b8380e" stroke="#1a0503" stroke-width="1.9" stroke-linejoin="round"/><polygon points="266.1,283.6 276.7,290.2 276.7,298.7 266.2,291.8" fill="#b8380e" stroke="#1a0503" stroke-width="1.9" stroke-linejoin="round"/><polygon points="276.7,290.2 287.9,297.3 287.9,305.9 276.7,298.7" fill="#b8380e" stroke="#1a0503" stroke-width="1.9" stroke-linejoin="round"/><polygon points="287.9,297.3 292.0,299.8 291.9,308.6 287.9,305.9" fill="#b8380e" stroke="#1a0503" stroke-width="1.9" stroke-linejoin="round"/><polygon points="292.0,299.8 380.9,291.5 380.7,300.0 291.9,308.6" fill="#1a0503" stroke="#1a0503" stroke-width="1.5" stroke-linejoin="round"/><polygon points="292.0,299.8 321.3,297.1 321.2,305.7 291.9,308.6" fill="#fa4c08" stroke="#1a0503" stroke-width="2.6" stroke-linejoin="round"/><polygon points="321.3,297.1 350.0,294.4 349.9,303.0 321.2,305.7" fill="#fa4c08" stroke="#1a0503" stroke-width="2.6" stroke-linejoin="round"/><polygon points="350.0,294.4 378.2,291.8 378.0,300.3 349.9,303.0" fill="#fa4c08" stroke="#1a0503" stroke-width="2.6" stroke-linejoin="round"/><polygon points="378.2,291.8 380.9,291.5 380.7,300.0 378.0,300.3" fill="#fa4c08" stroke="#1a0503" stroke-width="2.6" stroke-linejoin="round"/><polygon points="256.1,277.3 338.9,270.2 380.9,291.5 292.0,299.8" fill="#1a0503" stroke="#1a0503" stroke-width="1.5" stroke-linejoin="round"/><polygon points="290.5,280.8 325.3,277.8 343.8,287.7 307.7,290.9" fill="#983214" stroke="#1a0503" stroke-width="2.3" stroke-linejoin="round"/><polygon points="292.0,299.8 306.4,298.5 295.8,292.0 281.6,293.3" fill="#983214" stroke="#1a0503" stroke-width="2.3" stroke-linejoin="round"/><polygon points="306.4,298.5 320.8,297.1 309.8,290.7 295.8,292.0" fill="#983214" stroke="#1a0503" stroke-width="2.3" stroke-linejoin="round"/><polygon points="320.8,297.1 334.9,295.8 323.7,289.5 309.8,290.7" fill="#983214" stroke="#1a0503" stroke-width="2.3" stroke-linejoin="round"/><polygon points="334.9,295.8 349.0,294.5 337.5,288.2 323.7,289.5" fill="#983214" stroke="#1a0503" stroke-width="2.3" stroke-linejoin="round"/><polygon points="349.0,294.5 362.9,293.2 351.1,287.0 337.5,288.2" fill="#983214" stroke="#1a0503" stroke-width="2.3" stroke-linejoin="round"/><polygon points="362.9,293.2 376.7,291.9 364.6,285.8 351.1,287.0" fill="#983214" stroke="#1a0503" stroke-width="2.3" stroke-linejoin="round"/><polygon points="376.7,291.9 380.9,291.5 368.8,285.4 364.6,285.8" fill="#983214" stroke="#1a0503" stroke-width="2.3" stroke-linejoin="round"/><polygon points="281.6,293.3 307.7,290.9 302.1,287.6 276.2,289.9" fill="#983214" stroke="#1a0503" stroke-width="2.3" stroke-linejoin="round"/><polygon points="276.2,289.9 302.1,287.6 296.5,284.4 271.0,286.6" fill="#983214" stroke="#1a0503" stroke-width="2.3" stroke-linejoin="round"/><polygon points="271.0,286.6 296.5,284.4 291.2,281.2 265.8,283.4" fill="#983214" stroke="#1a0503" stroke-width="2.3" stroke-linejoin="round"/><polygon points="265.8,283.4 291.2,281.2 285.9,278.1 260.8,280.3" fill="#983214" stroke="#1a0503" stroke-width="2.3" stroke-linejoin="round"/><polygon points="260.8,280.3 285.9,278.1 280.9,275.1 256.1,277.3" fill="#983214" stroke="#1a0503" stroke-width="2.3" stroke-linejoin="round"/><polygon points="261.1,268.8 294.0,288.5 294.0,297.2 261.2,276.8" fill="#1a0503" stroke="#1a0503" stroke-width="1.5" stroke-linejoin="round"/><polygon points="261.1,268.8 271.3,274.9 271.3,283.1 261.2,276.8" fill="#b8380e" stroke="#1a0503" stroke-width="1.9" stroke-linejoin="round"/><polygon points="271.3,274.9 282.1,281.3 282.0,289.8 271.3,283.1" fill="#b8380e" stroke="#1a0503" stroke-width="1.9" stroke-linejoin="round"/><polygon points="282.1,281.3 293.4,288.1 293.3,296.8 282.0,289.8" fill="#b8380e" stroke="#1a0503" stroke-width="1.9" stroke-linejoin="round"/><polygon points="293.4,288.1 294.0,288.5 294.0,297.2 293.3,296.8" fill="#b8380e" stroke="#1a0503" stroke-width="1.9" stroke-linejoin="round"/><polygon points="294.0,288.5 372.0,281.5 371.8,290.0 294.0,297.2" fill="#1a0503" stroke="#1a0503" stroke-width="1.5" stroke-linejoin="round"/><polygon points="294.0,288.5 323.1,285.9 323.0,294.5 294.0,297.2" fill="#fa4c08" stroke="#1a0503" stroke-width="2.6" stroke-linejoin="round"/><polygon points="323.1,285.9 351.6,283.3 351.5,291.8 323.0,294.5" fill="#fa4c08" stroke="#1a0503" stroke-width="2.6" stroke-linejoin="round"/><polygon points="351.6,283.3 372.0,281.5 371.8,290.0 351.5,291.8" fill="#fa4c08" stroke="#1a0503" stroke-width="2.6" stroke-linejoin="round"/><polygon points="261.1,268.8 334.1,262.8 372.0,281.5 294.0,288.5" fill="#1a0503" stroke="#1a0503" stroke-width="1.5" stroke-linejoin="round"/><polygon points="295.6,272.2 320.4,270.1 335.1,277.8 309.6,280.0" fill="#983214" stroke="#1a0503" stroke-width="2.3" stroke-linejoin="round"/><polygon points="294.0,288.5 308.4,287.2 297.8,281.1 283.7,282.3" fill="#983214" stroke="#1a0503" stroke-width="2.3" stroke-linejoin="round"/><polygon points="308.4,287.2 322.6,285.9 311.7,279.9 297.8,281.1" fill="#983214" stroke="#1a0503" stroke-width="2.3" stroke-linejoin="round"/><polygon points="322.6,285.9 336.6,284.7 325.5,278.6 311.7,279.9" fill="#983214" stroke="#1a0503" stroke-width="2.3" stroke-linejoin="round"/><polygon points="336.6,284.7 350.6,283.4 339.1,277.5 325.5,278.6" fill="#983214" stroke="#1a0503" stroke-width="2.3" stroke-linejoin="round"/><polygon points="350.6,283.4 364.4,282.2 352.7,276.3 339.1,277.5" fill="#983214" stroke="#1a0503" stroke-width="2.3" stroke-linejoin="round"/><polygon points="364.4,282.2 372.0,281.5 360.1,275.6 352.7,276.3" fill="#983214" stroke="#1a0503" stroke-width="2.3" stroke-linejoin="round"/><polygon points="283.7,282.3 309.6,280.0 304.0,276.9 278.3,279.1" fill="#983214" stroke="#1a0503" stroke-width="2.3" stroke-linejoin="round"/><polygon points="278.3,279.1 304.0,276.9 298.5,273.8 273.1,275.9" fill="#983214" stroke="#1a0503" stroke-width="2.3" stroke-linejoin="round"/><polygon points="273.1,275.9 298.5,273.8 293.1,270.8 268.0,272.9" fill="#983214" stroke="#1a0503" stroke-width="2.3" stroke-linejoin="round"/><polygon points="268.0,272.9 293.1,270.8 287.8,267.8 263.0,269.9" fill="#983214" stroke="#1a0503" stroke-width="2.3" stroke-linejoin="round"/><polygon points="263.0,269.9 287.8,267.8 285.9,266.7 261.1,268.8" fill="#983214" stroke="#1a0503" stroke-width="2.3" stroke-linejoin="round"/><polygon points="266.0,260.3 297.0,278.0 297.0,286.7 266.0,268.4" fill="#1a0503" stroke="#1a0503" stroke-width="1.5" stroke-linejoin="round"/><polygon points="266.0,260.3 276.3,266.2 276.3,274.4 266.0,268.4" fill="#b8380e" stroke="#1a0503" stroke-width="1.9" stroke-linejoin="round"/><polygon points="276.3,266.2 287.2,272.4 287.2,280.9 276.3,274.4" fill="#b8380e" stroke="#1a0503" stroke-width="1.9" stroke-linejoin="round"/><polygon points="287.2,272.4 297.0,278.0 297.0,286.7 287.2,280.9" fill="#b8380e" stroke="#1a0503" stroke-width="1.9" stroke-linejoin="round"/><polygon points="297.0,278.0 364.6,272.2 364.4,280.6 297.0,286.7" fill="#1a0503" stroke="#1a0503" stroke-width="1.5" stroke-linejoin="round"/><polygon points="297.0,278.0 325.9,275.5 325.8,284.1 297.0,286.7" fill="#fa4c08" stroke="#1a0503" stroke-width="2.6" stroke-linejoin="round"/><polygon points="325.9,275.5 354.2,273.1 354.1,281.6 325.8,284.1" fill="#fa4c08" stroke="#1a0503" stroke-width="2.6" stroke-linejoin="round"/><polygon points="354.2,273.1 364.6,272.2 364.4,280.6 354.1,281.6" fill="#fa4c08" stroke="#1a0503" stroke-width="2.6" stroke-linejoin="round"/><polygon points="266.0,260.3 329.6,255.2 364.6,272.2 297.0,278.0" fill="#1a0503" stroke="#1a0503" stroke-width="1.5" stroke-linejoin="round"/><polygon points="300.6,263.6 315.7,262.3 327.9,268.6 312.4,269.9" fill="#983214" stroke="#1a0503" stroke-width="2.3" stroke-linejoin="round"/><polygon points="297.0,278.0 311.3,276.8 300.6,270.9 286.6,272.1" fill="#983214" stroke="#1a0503" stroke-width="2.3" stroke-linejoin="round"/><polygon points="311.3,276.8 325.4,275.6 314.5,269.7 300.6,270.9" fill="#983214" stroke="#1a0503" stroke-width="2.3" stroke-linejoin="round"/><polygon points="325.4,275.6 339.4,274.3 328.2,268.6 314.5,269.7" fill="#983214" stroke="#1a0503" stroke-width="2.3" stroke-linejoin="round"/><polygon points="339.4,274.3 353.2,273.1 341.7,267.5 328.2,268.6" fill="#983214" stroke="#1a0503" stroke-width="2.3" stroke-linejoin="round"/><polygon points="353.2,273.1 364.6,272.2 352.9,266.5 341.7,267.5" fill="#983214" stroke="#1a0503" stroke-width="2.3" stroke-linejoin="round"/><polygon points="286.6,272.1 312.4,269.9 306.8,266.9 281.3,269.0" fill="#983214" stroke="#1a0503" stroke-width="2.3" stroke-linejoin="round"/><polygon points="281.3,269.0 306.8,266.9 301.2,263.9 276.0,266.0" fill="#983214" stroke="#1a0503" stroke-width="2.3" stroke-linejoin="round"/><polygon points="276.0,266.0 301.2,263.9 295.9,261.1 270.9,263.1" fill="#983214" stroke="#1a0503" stroke-width="2.3" stroke-linejoin="round"/><polygon points="270.9,263.1 295.9,261.1 290.7,258.3 266.0,260.3" fill="#983214" stroke="#1a0503" stroke-width="2.3" stroke-linejoin="round"/><polygon points="271.0,251.8 298.9,267.0 298.8,275.6 271.0,259.9" fill="#1a0503" stroke="#1a0503" stroke-width="1.5" stroke-linejoin="round"/><polygon points="271.0,251.8 281.4,257.5 281.4,265.8 271.0,259.9" fill="#b8380e" stroke="#1a0503" stroke-width="1.9" stroke-linejoin="round"/><polygon points="281.4,257.5 292.4,263.4 292.4,271.9 281.4,265.8" fill="#b8380e" stroke="#1a0503" stroke-width="1.9" stroke-linejoin="round"/><polygon points="292.4,263.4 298.9,267.0 298.8,275.6 292.4,271.9" fill="#b8380e" stroke="#1a0503" stroke-width="1.9" stroke-linejoin="round"/><polygon points="298.9,267.0 359.3,262.0 359.1,270.4 298.8,275.6" fill="#1a0503" stroke="#1a0503" stroke-width="1.5" stroke-linejoin="round"/><polygon points="298.9,267.0 327.5,264.6 327.5,273.2 298.8,275.6" fill="#fa4c08" stroke="#1a0503" stroke-width="2.6" stroke-linejoin="round"/><polygon points="327.5,264.6 355.6,262.3 355.5,270.8 327.5,273.2" fill="#fa4c08" stroke="#1a0503" stroke-width="2.6" stroke-linejoin="round"/><polygon points="355.6,262.3 359.3,262.0 359.1,270.4 355.5,270.8" fill="#fa4c08" stroke="#1a0503" stroke-width="2.6" stroke-linejoin="round"/><polygon points="271.0,251.8 328.1,247.4 359.3,262.0 298.9,267.0" fill="#1a0503" stroke="#1a0503" stroke-width="1.5" stroke-linejoin="round"/><polygon points="305.6,255.0 314.1,254.3 322.8,258.6 314.1,259.3" fill="#983214" stroke="#1a0503" stroke-width="2.3" stroke-linejoin="round"/><polygon points="298.9,267.0 313.0,265.8 302.4,260.3 288.6,261.4" fill="#983214" stroke="#1a0503" stroke-width="2.3" stroke-linejoin="round"/><polygon points="313.0,265.8 327.0,264.7 316.2,259.2 302.4,260.3" fill="#983214" stroke="#1a0503" stroke-width="2.3" stroke-linejoin="round"/><polygon points="327.0,264.7 340.9,263.5 329.8,258.1 316.2,259.2" fill="#983214" stroke="#1a0503" stroke-width="2.3" stroke-linejoin="round"/><polygon points="340.9,263.5 354.6,262.4 343.2,257.0 329.8,258.1" fill="#983214" stroke="#1a0503" stroke-width="2.3" stroke-linejoin="round"/><polygon points="354.6,262.4 359.3,262.0 347.8,256.6 343.2,257.0" fill="#983214" stroke="#1a0503" stroke-width="2.3" stroke-linejoin="round"/><polygon points="288.6,261.4 314.1,259.3 308.5,256.4 283.2,258.4" fill="#983214" stroke="#1a0503" stroke-width="2.3" stroke-linejoin="round"/><polygon points="283.2,258.4 308.5,256.4 303.0,253.6 278.0,255.6" fill="#983214" stroke="#1a0503" stroke-width="2.3" stroke-linejoin="round"/><polygon points="278.0,255.6 303.0,253.6 297.6,250.9 272.9,252.8" fill="#983214" stroke="#1a0503" stroke-width="2.3" stroke-linejoin="round"/><polygon points="272.9,252.8 297.6,250.9 295.6,249.9 271.0,251.8" fill="#983214" stroke="#1a0503" stroke-width="2.3" stroke-linejoin="round"/><polygon points="271.0,243.7 296.2,256.9 296.2,265.5 271.0,251.8" fill="#1a0503" stroke="#1a0503" stroke-width="1.5" stroke-linejoin="round"/><polygon points="271.0,243.7 281.4,249.1 281.4,257.5 271.0,251.8" fill="#b8380e" stroke="#1a0503" stroke-width="1.9" stroke-linejoin="round"/><polygon points="281.4,249.1 292.4,254.9 292.4,263.4 281.4,257.5" fill="#b8380e" stroke="#1a0503" stroke-width="1.9" stroke-linejoin="round"/><polygon points="292.4,254.9 296.2,256.9 296.2,265.5 292.4,263.4" fill="#b8380e" stroke="#1a0503" stroke-width="1.9" stroke-linejoin="round"/><polygon points="296.2,256.9 354.9,252.3 354.8,260.7 296.2,265.5" fill="#1a0503" stroke="#1a0503" stroke-width="1.5" stroke-linejoin="round"/><polygon points="296.2,256.9 324.8,254.7 324.7,263.2 296.2,265.5" fill="#fa4c08" stroke="#1a0503" stroke-width="2.6" stroke-linejoin="round"/><polygon points="324.8,254.7 352.8,252.5 352.7,260.9 324.7,263.2" fill="#fa4c08" stroke="#1a0503" stroke-width="2.6" stroke-linejoin="round"/><polygon points="352.8,252.5 354.9,252.3 354.8,260.7 352.7,260.9" fill="#fa4c08" stroke="#1a0503" stroke-width="2.6" stroke-linejoin="round"/><polygon points="271.0,243.7 326.8,239.5 354.9,252.3 296.2,256.9" fill="#1a0503" stroke="#1a0503" stroke-width="1.5" stroke-linejoin="round"/><polygon points="305.6,246.7 312.7,246.2 318.7,249.1 311.5,249.6" fill="#983214" stroke="#1a0503" stroke-width="2.3" stroke-linejoin="round"/><polygon points="296.2,256.9 310.3,255.8 299.8,250.5 286.0,251.6" fill="#983214" stroke="#1a0503" stroke-width="2.3" stroke-linejoin="round"/><polygon points="310.3,255.8 324.3,254.7 313.5,249.5 299.8,250.5" fill="#983214" stroke="#1a0503" stroke-width="2.3" stroke-linejoin="round"/><polygon points="324.3,254.7 338.1,253.6 327.1,248.4 313.5,249.5" fill="#983214" stroke="#1a0503" stroke-width="2.3" stroke-linejoin="round"/><polygon points="338.1,253.6 351.8,252.5 340.5,247.4 327.1,248.4" fill="#983214" stroke="#1a0503" stroke-width="2.3" stroke-linejoin="round"/><polygon points="351.8,252.5 354.9,252.3 343.6,247.1 340.5,247.4" fill="#983214" stroke="#1a0503" stroke-width="2.3" stroke-linejoin="round"/><polygon points="286.0,251.6 311.5,249.6 305.9,246.9 280.7,248.8" fill="#983214" stroke="#1a0503" stroke-width="2.3" stroke-linejoin="round"/><polygon points="280.7,248.8 305.9,246.9 300.5,244.2 275.5,246.1" fill="#983214" stroke="#1a0503" stroke-width="2.3" stroke-linejoin="round"/><polygon points="275.5,246.1 300.5,244.2 295.7,241.8 271.0,243.7" fill="#983214" stroke="#1a0503" stroke-width="2.3" stroke-linejoin="round"/><polygon points="271.0,235.5 295.0,247.7 295.0,256.3 271.0,243.7" fill="#1a0503" stroke="#1a0503" stroke-width="1.5" stroke-linejoin="round"/><polygon points="271.0,235.5 281.4,240.8 281.4,249.1 271.0,243.7" fill="#b8380e" stroke="#1a0503" stroke-width="1.9" stroke-linejoin="round"/><polygon points="281.4,240.8 292.5,246.4 292.4,254.9 281.4,249.1" fill="#b8380e" stroke="#1a0503" stroke-width="1.9" stroke-linejoin="round"/><polygon points="292.5,246.4 295.0,247.7 295.0,256.3 292.4,254.9" fill="#b8380e" stroke="#1a0503" stroke-width="1.9" stroke-linejoin="round"/><polygon points="295.0,247.7 352.7,243.3 352.5,251.7 295.0,256.3" fill="#1a0503" stroke="#1a0503" stroke-width="1.5" stroke-linejoin="round"/><polygon points="295.0,247.7 323.6,245.5 323.5,254.0 295.0,256.3" fill="#fa4c08" stroke="#1a0503" stroke-width="2.6" stroke-linejoin="round"/><polygon points="323.6,245.5 351.6,243.4 351.4,251.8 323.5,254.0" fill="#fa4c08" stroke="#1a0503" stroke-width="2.6" stroke-linejoin="round"/><polygon points="351.6,243.4 352.7,243.3 352.5,251.7 351.4,251.8" fill="#fa4c08" stroke="#1a0503" stroke-width="2.6" stroke-linejoin="round"/><polygon points="271.0,235.5 325.9,231.6 352.7,243.3 295.0,247.7" fill="#1a0503" stroke="#1a0503" stroke-width="1.5" stroke-linejoin="round"/><polygon points="305.7,238.5 311.8,238.0 316.5,240.2 310.3,240.6" fill="#983214" stroke="#1a0503" stroke-width="2.3" stroke-linejoin="round"/><polygon points="295.0,247.7 309.1,246.6 298.7,241.5 284.9,242.5" fill="#983214" stroke="#1a0503" stroke-width="2.3" stroke-linejoin="round"/><polygon points="309.1,246.6 323.1,245.5 312.3,240.5 298.7,241.5" fill="#983214" stroke="#1a0503" stroke-width="2.3" stroke-linejoin="round"/><polygon points="323.1,245.5 336.9,244.5 325.9,239.5 312.3,240.5" fill="#983214" stroke="#1a0503" stroke-width="2.3" stroke-linejoin="round"/><polygon points="336.9,244.5 350.6,243.4 339.3,238.5 325.9,239.5" fill="#983214" stroke="#1a0503" stroke-width="2.3" stroke-linejoin="round"/><polygon points="350.6,243.4 352.7,243.3 341.4,238.4 339.3,238.5" fill="#983214" stroke="#1a0503" stroke-width="2.3" stroke-linejoin="round"/><polygon points="284.9,242.5 310.3,240.6 304.8,238.0 279.6,239.9" fill="#983214" stroke="#1a0503" stroke-width="2.3" stroke-linejoin="round"/><polygon points="279.6,239.9 304.8,238.0 299.3,235.5 274.4,237.2" fill="#983214" stroke="#1a0503" stroke-width="2.3" stroke-linejoin="round"/><polygon points="274.4,237.2 299.3,235.5 295.7,233.7 271.0,235.5" fill="#983214" stroke="#1a0503" stroke-width="2.3" stroke-linejoin="round"/><polygon points="270.7,41.1 294.0,41.9 293.3,246.8 271.0,235.5" fill="#1a0503" stroke="#1a0503" stroke-width="1.5" stroke-linejoin="round"/><polygon points="270.7,41.1 282.3,41.5 282.3,50.5 270.7,49.9" fill="#b8380e" stroke="#1a0503" stroke-width="1.8" stroke-linejoin="round"/><polygon points="282.3,41.5 294.0,41.9 294.0,51.1 282.3,50.5" fill="#b8380e" stroke="#1a0503" stroke-width="1.8" stroke-linejoin="round"/><polygon points="270.7,49.9 276.4,50.2 276.4,59.1 270.8,58.7" fill="#b8380e" stroke="#1a0503" stroke-width="1.8" stroke-linejoin="round"/><polygon points="276.4,50.2 288.3,50.8 288.2,60.0 276.4,59.1" fill="#b8380e" stroke="#1a0503" stroke-width="1.8" stroke-linejoin="round"/><polygon points="288.3,50.8 294.0,51.1 294.0,60.4 288.2,60.0" fill="#b8380e" stroke="#1a0503" stroke-width="1.8" stroke-linejoin="round"/><polygon points="270.8,58.7 282.2,59.5 282.2,68.5 270.8,67.4" fill="#b8380e" stroke="#1a0503" stroke-width="1.8" stroke-linejoin="round"/><polygon points="282.2,59.5 294.0,60.4 293.9,69.6 282.2,68.5" fill="#b8380e" stroke="#1a0503" stroke-width="1.8" stroke-linejoin="round"/><polygon points="270.8,67.4 276.4,67.9 276.4,76.7 270.8,76.1" fill="#b8380e" stroke="#1a0503" stroke-width="1.8" stroke-linejoin="round"/><polygon points="276.4,67.9 288.2,69.1 288.2,78.1 276.4,76.7" fill="#b8380e" stroke="#1a0503" stroke-width="1.8" stroke-linejoin="round"/><polygon points="288.2,69.1 293.9,69.6 293.9,78.8 288.2,78.1" fill="#b8380e" stroke="#1a0503" stroke-width="1.8" stroke-linejoin="round"/><polygon points="270.8,76.1 282.2,77.4 282.2,86.3 270.8,84.8" fill="#b8380e" stroke="#1a0503" stroke-width="1.8" stroke-linejoin="round"/><polygon points="282.2,77.4 293.9,78.8 293.9,87.9 282.2,86.3" fill="#b8380e" stroke="#1a0503" stroke-width="1.8" stroke-linejoin="round"/><polygon points="270.8,84.8 276.4,85.5 276.4,94.3 270.8,93.4" fill="#b8380e" stroke="#1a0503" stroke-width="1.8" stroke-linejoin="round"/><polygon points="276.4,85.5 288.2,87.1 288.1,96.1 276.4,94.3" fill="#b8380e" stroke="#1a0503" stroke-width="1.8" stroke-linejoin="round"/><polygon points="288.2,87.1 293.9,87.9 293.8,97.0 288.1,96.1" fill="#b8380e" stroke="#1a0503" stroke-width="1.8" stroke-linejoin="round"/><polygon points="270.8,93.4 282.2,95.2 282.2,104.0 270.8,102.0" fill="#b8380e" stroke="#1a0503" stroke-width="1.8" stroke-linejoin="round"/><polygon points="282.2,95.2 293.8,97.0 293.8,106.1 282.2,104.0" fill="#b8380e" stroke="#1a0503" stroke-width="1.8" stroke-linejoin="round"/><polygon points="270.8,102.0 276.4,103.0 276.4,111.7 270.8,110.6" fill="#b8380e" stroke="#1a0503" stroke-width="1.8" stroke-linejoin="round"/><polygon points="276.4,103.0 288.1,105.1 288.1,114.0 276.4,111.7" fill="#b8380e" stroke="#1a0503" stroke-width="1.8" stroke-linejoin="round"/><polygon points="288.1,105.1 293.8,106.1 293.8,115.1 288.1,114.0" fill="#b8380e" stroke="#1a0503" stroke-width="1.8" stroke-linejoin="round"/><polygon points="270.8,110.6 282.2,112.8 282.2,121.6 270.8,119.1" fill="#b8380e" stroke="#1a0503" stroke-width="1.8" stroke-linejoin="round"/><polygon points="282.2,112.8 293.8,115.1 293.7,124.2 282.2,121.6" fill="#b8380e" stroke="#1a0503" stroke-width="1.8" stroke-linejoin="round"/><polygon points="270.8,119.1 276.4,120.3 276.4,128.9 270.8,127.6" fill="#b8380e" stroke="#1a0503" stroke-width="1.8" stroke-linejoin="round"/><polygon points="276.4,120.3 288.1,122.9 288.1,131.8 276.4,128.9" fill="#b8380e" stroke="#1a0503" stroke-width="1.8" stroke-linejoin="round"/><polygon points="288.1,122.9 293.7,124.2 293.7,133.1 288.1,131.8" fill="#b8380e" stroke="#1a0503" stroke-width="1.8" stroke-linejoin="round"/><polygon points="270.8,127.6 282.2,130.3 282.1,139.0 270.8,136.1" fill="#b8380e" stroke="#1a0503" stroke-width="1.8" stroke-linejoin="round"/><polygon points="282.2,130.3 293.7,133.1 293.7,142.1 282.1,139.0" fill="#b8380e" stroke="#1a0503" stroke-width="1.8" stroke-linejoin="round"/><polygon points="270.8,136.1 276.4,137.5 276.4,146.1 270.9,144.5" fill="#b8380e" stroke="#1a0503" stroke-width="1.8" stroke-linejoin="round"/><polygon points="276.4,137.5 288.0,140.6 288.0,149.4 276.4,146.1" fill="#b8380e" stroke="#1a0503" stroke-width="1.8" stroke-linejoin="round"/><polygon points="288.0,140.6 293.7,142.1 293.6,151.0 288.0,149.4" fill="#b8380e" stroke="#1a0503" stroke-width="1.8" stroke-linejoin="round"/><polygon points="270.9,144.5 282.1,147.7 282.1,156.4 270.9,152.9" fill="#b8380e" stroke="#1a0503" stroke-width="1.8" stroke-linejoin="round"/><polygon points="282.1,147.7 293.6,151.0 293.6,159.8 282.1,156.4" fill="#b8380e" stroke="#1a0503" stroke-width="1.8" stroke-linejoin="round"/><polygon points="270.9,152.9 276.4,154.6 276.4,163.1 270.9,161.3" fill="#b8380e" stroke="#1a0503" stroke-width="1.8" stroke-linejoin="round"/><polygon points="276.4,154.6 288.0,158.1 288.0,166.9 276.4,163.1" fill="#b8380e" stroke="#1a0503" stroke-width="1.8" stroke-linejoin="round"/><polygon points="288.0,158.1 293.6,159.8 293.6,168.7 288.0,166.9" fill="#b8380e" stroke="#1a0503" stroke-width="1.8" stroke-linejoin="round"/><polygon points="270.9,161.3 282.1,165.0 282.1,173.6 270.9,169.7" fill="#b8380e" stroke="#1a0503" stroke-width="1.8" stroke-linejoin="round"/><polygon points="282.1,165.0 293.6,168.7 293.5,177.5 282.1,173.6" fill="#b8380e" stroke="#1a0503" stroke-width="1.8" stroke-linejoin="round"/><polygon points="270.9,169.7 276.4,171.6 276.4,180.0 270.9,178.0" fill="#b8380e" stroke="#1a0503" stroke-width="1.8" stroke-linejoin="round"/><polygon points="276.4,171.6 287.9,175.6 287.9,184.2 276.4,180.0" fill="#b8380e" stroke="#1a0503" stroke-width="1.8" stroke-linejoin="round"/><polygon points="287.9,175.6 293.5,177.5 293.5,186.3 287.9,184.2" fill="#b8380e" stroke="#1a0503" stroke-width="1.8" stroke-linejoin="round"/><polygon points="270.9,178.0 282.1,182.1 282.1,190.6 270.9,186.3" fill="#b8380e" stroke="#1a0503" stroke-width="1.8" stroke-linejoin="round"/><polygon points="282.1,182.1 293.5,186.3 293.5,195.0 282.1,190.6" fill="#b8380e" stroke="#1a0503" stroke-width="1.8" stroke-linejoin="round"/><polygon points="270.9,186.3 276.4,188.4 276.4,196.8 270.9,194.6" fill="#b8380e" stroke="#1a0503" stroke-width="1.8" stroke-linejoin="round"/><polygon points="276.4,188.4 287.9,192.9 287.9,201.5 276.4,196.8" fill="#b8380e" stroke="#1a0503" stroke-width="1.8" stroke-linejoin="round"/><polygon points="287.9,192.9 293.5,195.0 293.4,203.7 287.9,201.5" fill="#b8380e" stroke="#1a0503" stroke-width="1.8" stroke-linejoin="round"/><polygon points="270.9,194.6 282.1,199.1 282.1,207.6 270.9,202.8" fill="#b8380e" stroke="#1a0503" stroke-width="1.8" stroke-linejoin="round"/><polygon points="282.1,199.1 293.4,203.7 293.4,212.4 282.1,207.6" fill="#b8380e" stroke="#1a0503" stroke-width="1.8" stroke-linejoin="round"/><polygon points="270.9,202.8 276.4,205.2 276.4,213.5 270.9,211.0" fill="#b8380e" stroke="#1a0503" stroke-width="1.8" stroke-linejoin="round"/><polygon points="276.4,205.2 287.9,210.0 287.8,218.6 276.4,213.5" fill="#b8380e" stroke="#1a0503" stroke-width="1.8" stroke-linejoin="round"/><polygon points="287.9,210.0 293.4,212.4 293.4,221.0 287.8,218.6" fill="#b8380e" stroke="#1a0503" stroke-width="1.8" stroke-linejoin="round"/><polygon points="270.9,211.0 282.1,216.0 282.0,224.4 270.9,219.2" fill="#b8380e" stroke="#1a0503" stroke-width="1.8" stroke-linejoin="round"/><polygon points="282.1,216.0 293.4,221.0 293.3,229.6 282.0,224.4" fill="#b8380e" stroke="#1a0503" stroke-width="1.8" stroke-linejoin="round"/><polygon points="270.9,219.2 276.4,221.8 276.4,230.0 270.9,227.4" fill="#b8380e" stroke="#1a0503" stroke-width="1.8" stroke-linejoin="round"/><polygon points="276.4,221.8 287.8,227.1 287.8,235.6 276.4,230.0" fill="#b8380e" stroke="#1a0503" stroke-width="1.8" stroke-linejoin="round"/><polygon points="287.8,227.1 293.3,229.6 293.3,238.2 287.8,235.6" fill="#b8380e" stroke="#1a0503" stroke-width="1.8" stroke-linejoin="round"/><polygon points="270.9,227.4 282.0,232.8 282.0,241.1 271.0,235.5" fill="#b8380e" stroke="#1a0503" stroke-width="1.8" stroke-linejoin="round"/><polygon points="282.0,232.8 293.3,238.2 293.3,246.8 282.0,241.1" fill="#b8380e" stroke="#1a0503" stroke-width="1.8" stroke-linejoin="round"/><polygon points="294.0,41.9 353.0,41.6 349.8,242.5 293.3,246.8" fill="#1a0503" stroke="#1a0503" stroke-width="1.5" stroke-linejoin="round"/><polygon points="294.0,41.9 309.8,41.8 309.7,51.0 294.0,51.1" fill="#fa4c08" stroke="#1a0503" stroke-width="2.1" stroke-linejoin="round"/><polygon points="309.8,41.8 340.7,41.6 340.6,50.8 309.7,51.0" fill="#fa4c08" stroke="#1a0503" stroke-width="2.1" stroke-linejoin="round"/><polygon points="340.7,41.6 353.0,41.6 352.9,50.7 340.6,50.8" fill="#fa4c08" stroke="#1a0503" stroke-width="2.1" stroke-linejoin="round"/><polygon points="294.0,51.1 325.2,50.9 325.1,60.0 294.0,60.4" fill="#fa4c08" stroke="#1a0503" stroke-width="2.1" stroke-linejoin="round"/><polygon points="325.2,50.9 352.9,50.7 352.7,59.7 325.1,60.0" fill="#fa4c08" stroke="#1a0503" stroke-width="2.1" stroke-linejoin="round"/><polygon points="294.0,60.4 309.6,60.2 309.6,69.4 293.9,69.6" fill="#fa4c08" stroke="#1a0503" stroke-width="2.1" stroke-linejoin="round"/><polygon points="309.6,60.2 340.5,59.9 340.3,68.9 309.6,69.4" fill="#fa4c08" stroke="#1a0503" stroke-width="2.1" stroke-linejoin="round"/><polygon points="340.5,59.9 352.7,59.7 352.6,68.8 340.3,68.9" fill="#fa4c08" stroke="#1a0503" stroke-width="2.1" stroke-linejoin="round"/><polygon points="293.9,69.6 325.0,69.2 324.9,78.2 293.9,78.8" fill="#fa4c08" stroke="#1a0503" stroke-width="2.1" stroke-linejoin="round"/><polygon points="325.0,69.2 352.6,68.8 352.4,77.8 324.9,78.2" fill="#fa4c08" stroke="#1a0503" stroke-width="2.1" stroke-linejoin="round"/><polygon points="293.9,78.8 309.5,78.5 309.4,87.6 293.9,87.9" fill="#fa4c08" stroke="#1a0503" stroke-width="2.1" stroke-linejoin="round"/><polygon points="309.5,78.5 340.2,78.0 340.1,87.0 309.4,87.6" fill="#fa4c08" stroke="#1a0503" stroke-width="2.1" stroke-linejoin="round"/><polygon points="340.2,78.0 352.4,77.8 352.3,86.7 340.1,87.0" fill="#fa4c08" stroke="#1a0503" stroke-width="2.1" stroke-linejoin="round"/><polygon points="293.9,87.9 324.9,87.3 324.8,96.3 293.8,97.0" fill="#fa4c08" stroke="#1a0503" stroke-width="2.1" stroke-linejoin="round"/><polygon points="324.9,87.3 352.3,86.7 352.1,95.7 324.8,96.3" fill="#fa4c08" stroke="#1a0503" stroke-width="2.1" stroke-linejoin="round"/><polygon points="293.8,97.0 309.4,96.7 309.3,105.7 293.8,106.1" fill="#fa4c08" stroke="#1a0503" stroke-width="2.1" stroke-linejoin="round"/><polygon points="309.4,96.7 340.0,95.9 339.9,104.9 309.3,105.7" fill="#fa4c08" stroke="#1a0503" stroke-width="2.1" stroke-linejoin="round"/><polygon points="340.0,95.9 352.1,95.7 352.0,104.5 339.9,104.9" fill="#fa4c08" stroke="#1a0503" stroke-width="2.1" stroke-linejoin="round"/><polygon points="293.8,106.1 324.7,105.3 324.6,114.2 293.8,115.1" fill="#fa4c08" stroke="#1a0503" stroke-width="2.1" stroke-linejoin="round"/><polygon points="324.7,105.3 352.0,104.5 351.9,113.4 324.6,114.2" fill="#fa4c08" stroke="#1a0503" stroke-width="2.1" stroke-linejoin="round"/><polygon points="293.8,115.1 309.3,114.7 309.2,123.6 293.7,124.2" fill="#fa4c08" stroke="#1a0503" stroke-width="2.1" stroke-linejoin="round"/><polygon points="309.3,114.7 339.7,113.8 339.6,122.6 309.2,123.6" fill="#fa4c08" stroke="#1a0503" stroke-width="2.1" stroke-linejoin="round"/><polygon points="339.7,113.8 351.9,113.4 351.7,122.2 339.6,122.6" fill="#fa4c08" stroke="#1a0503" stroke-width="2.1" stroke-linejoin="round"/><polygon points="293.7,124.2 324.5,123.1 324.4,132.0 293.7,133.1" fill="#fa4c08" stroke="#1a0503" stroke-width="2.1" stroke-linejoin="round"/><polygon points="324.5,123.1 351.7,122.2 351.6,131.0 324.4,132.0" fill="#fa4c08" stroke="#1a0503" stroke-width="2.1" stroke-linejoin="round"/><polygon points="293.7,133.1 309.1,132.6 309.1,141.5 293.7,142.1" fill="#fa4c08" stroke="#1a0503" stroke-width="2.1" stroke-linejoin="round"/><polygon points="309.1,132.6 339.5,131.5 339.4,140.3 309.1,141.5" fill="#fa4c08" stroke="#1a0503" stroke-width="2.1" stroke-linejoin="round"/><polygon points="339.5,131.5 351.6,131.0 351.4,139.8 339.4,140.3" fill="#fa4c08" stroke="#1a0503" stroke-width="2.1" stroke-linejoin="round"/><polygon points="293.7,142.1 324.3,140.9 324.2,149.7 293.6,151.0" fill="#fa4c08" stroke="#1a0503" stroke-width="2.1" stroke-linejoin="round"/><polygon points="324.3,140.9 351.4,139.8 351.3,148.5 324.2,149.7" fill="#fa4c08" stroke="#1a0503" stroke-width="2.1" stroke-linejoin="round"/><polygon points="293.6,151.0 309.0,150.3 308.9,159.1 293.6,159.8" fill="#fa4c08" stroke="#1a0503" stroke-width="2.1" stroke-linejoin="round"/><polygon points="309.0,150.3 339.3,149.0 339.2,157.8 308.9,159.1" fill="#fa4c08" stroke="#1a0503" stroke-width="2.1" stroke-linejoin="round"/><polygon points="339.3,149.0 351.3,148.5 351.2,157.2 339.2,157.8" fill="#fa4c08" stroke="#1a0503" stroke-width="2.1" stroke-linejoin="round"/><polygon points="293.6,159.8 324.1,158.5 324.0,167.2 293.6,168.7" fill="#fa4c08" stroke="#1a0503" stroke-width="2.1" stroke-linejoin="round"/><polygon points="324.1,158.5 351.2,157.2 351.0,165.9 324.0,167.2" fill="#fa4c08" stroke="#1a0503" stroke-width="2.1" stroke-linejoin="round"/><polygon points="293.6,168.7 308.9,167.9 308.8,176.7 293.5,177.5" fill="#fa4c08" stroke="#1a0503" stroke-width="2.1" stroke-linejoin="round"/><polygon points="308.9,167.9 339.0,166.5 338.9,175.2 308.8,176.7" fill="#fa4c08" stroke="#1a0503" stroke-width="2.1" stroke-linejoin="round"/><polygon points="339.0,166.5 351.0,165.9 350.9,174.5 338.9,175.2" fill="#fa4c08" stroke="#1a0503" stroke-width="2.1" stroke-linejoin="round"/><polygon points="293.5,177.5 324.0,175.9 323.9,184.6 293.5,186.3" fill="#fa4c08" stroke="#1a0503" stroke-width="2.1" stroke-linejoin="round"/><polygon points="324.0,175.9 350.9,174.5 350.8,183.1 323.9,184.6" fill="#fa4c08" stroke="#1a0503" stroke-width="2.1" stroke-linejoin="round"/><polygon points="293.5,186.3 308.8,185.4 308.7,194.1 293.5,195.0" fill="#fa4c08" stroke="#1a0503" stroke-width="2.1" stroke-linejoin="round"/><polygon points="308.8,185.4 338.8,183.8 338.7,192.4 308.7,194.1" fill="#fa4c08" stroke="#1a0503" stroke-width="2.1" stroke-linejoin="round"/><polygon points="338.8,183.8 350.8,183.1 350.6,191.7 338.7,192.4" fill="#fa4c08" stroke="#1a0503" stroke-width="2.1" stroke-linejoin="round"/><polygon points="293.5,195.0 323.8,193.3 323.7,201.9 293.4,203.7" fill="#fa4c08" stroke="#1a0503" stroke-width="2.1" stroke-linejoin="round"/><polygon points="323.8,193.3 350.6,191.7 350.5,200.3 323.7,201.9" fill="#fa4c08" stroke="#1a0503" stroke-width="2.1" stroke-linejoin="round"/><polygon points="293.4,203.7 308.6,202.8 308.6,211.4 293.4,212.4" fill="#fa4c08" stroke="#1a0503" stroke-width="2.1" stroke-linejoin="round"/><polygon points="308.6,202.8 338.6,201.0 338.5,209.5 308.6,211.4" fill="#fa4c08" stroke="#1a0503" stroke-width="2.1" stroke-linejoin="round"/><polygon points="338.6,201.0 350.5,200.3 350.4,208.8 338.5,209.5" fill="#fa4c08" stroke="#1a0503" stroke-width="2.1" stroke-linejoin="round"/><polygon points="293.4,212.4 323.6,210.5 323.5,219.0 293.4,221.0" fill="#fa4c08" stroke="#1a0503" stroke-width="2.1" stroke-linejoin="round"/><polygon points="323.6,210.5 350.4,208.8 350.2,217.3 323.5,219.0" fill="#fa4c08" stroke="#1a0503" stroke-width="2.1" stroke-linejoin="round"/><polygon points="293.4,221.0 308.5,220.0 308.5,228.6 293.3,229.6" fill="#fa4c08" stroke="#1a0503" stroke-width="2.1" stroke-linejoin="round"/><polygon points="308.5,220.0 338.4,218.0 338.3,226.5 308.5,228.6" fill="#fa4c08" stroke="#1a0503" stroke-width="2.1" stroke-linejoin="round"/><polygon points="338.4,218.0 350.2,217.3 350.1,225.7 338.3,226.5" fill="#fa4c08" stroke="#1a0503" stroke-width="2.1" stroke-linejoin="round"/><polygon points="293.3,229.6 323.4,227.6 323.4,236.1 293.3,238.2" fill="#fa4c08" stroke="#1a0503" stroke-width="2.1" stroke-linejoin="round"/><polygon points="323.4,227.6 350.1,225.7 350.0,234.1 323.4,236.1" fill="#fa4c08" stroke="#1a0503" stroke-width="2.1" stroke-linejoin="round"/><polygon points="293.3,238.2 308.4,237.1 308.4,245.6 293.3,246.8" fill="#fa4c08" stroke="#1a0503" stroke-width="2.1" stroke-linejoin="round"/><polygon points="308.4,237.1 338.1,235.0 338.0,243.4 308.4,245.6" fill="#fa4c08" stroke="#1a0503" stroke-width="2.1" stroke-linejoin="round"/><polygon points="338.1,235.0 350.0,234.1 349.8,242.5 338.0,243.4" fill="#fa4c08" stroke="#1a0503" stroke-width="2.1" stroke-linejoin="round"/><polygon points="270.7,41.1 327.0,40.9 353.0,41.6 294.0,41.9" fill="#1a0a06" stroke="#111" stroke-width="2" stroke-linejoin="round"/><line x1="175.6" y1="558.9" x2="144.0" y2="505.6" stroke="#28a028" stroke-width="1.2"/><line x1="175.6" y1="558.9" x2="75.5" y2="-3755.0" stroke="#1c1c90" stroke-width="1.4"/></svg></body></html>
